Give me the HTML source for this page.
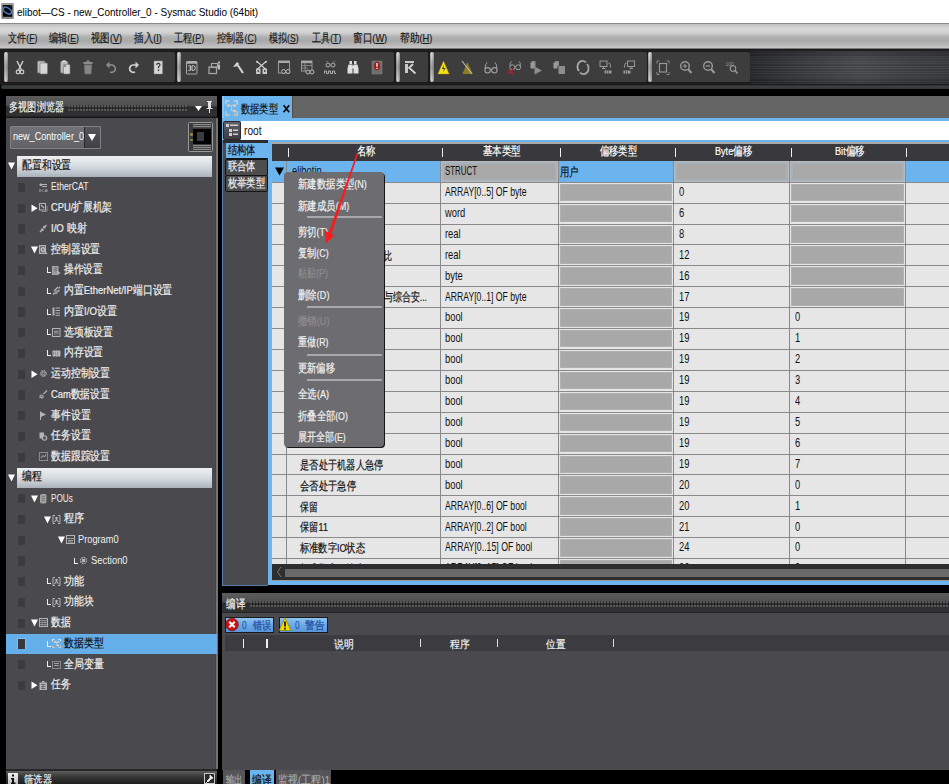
<!DOCTYPE html><html><head><meta charset="utf-8"><style>
*{margin:0;padding:0;box-sizing:border-box}
html,body{width:949px;height:784px;overflow:hidden;background:#000;font-family:"Liberation Sans",sans-serif}
.abs{position:absolute}
.t{position:absolute;white-space:nowrap;line-height:1;-webkit-text-stroke:0.2px currentColor}
u{text-decoration-thickness:1px;text-underline-offset:1px}
</style></head><body>
<div class="abs" style="left:0;top:0;width:949px;height:784px;overflow:hidden">

<div class="abs" style="left:0;top:0;width:949px;height:23px;background:#fff"></div>
<svg class="abs" style="left:0;top:0" width="16" height="22"><rect x="1.2" y="3" width="12.6" height="16" fill="#8e8e90" rx=".8"/><rect x="2" y="3.6" width="11" height="1" fill="#b0b0b2"/><rect x="2.8" y="5" width="9.4" height="11.8" fill="#050608"/><ellipse cx="7.3" cy="10.6" rx="4.6" ry="2.6" transform="rotate(35 7.3 10.6)" fill="none" stroke="#4a7cc8" stroke-width="1.5"/><circle cx="11" cy="6.3" r=".8" fill="#555"/></svg>
<div class="t" id="t0" style="left:16.90px;top:7.40px;font-size:11.5px;color:#000;-webkit-text-stroke:0;transform:scaleX(0.8668);transform-origin:0 0;">elibot—CS - new_Controller_0 - Sysmac Studio (64bit)</div>
<div class="abs" style="left:0;top:23px;width:949px;height:27px;background:linear-gradient(#555 0px,#bdbdbd 1px,#cbcbcb 3px,#d8d8d8 6px,#cfcfcf 10px,#b0b0b0 14px,#a9a9a9 18px,#b9b9b9 22px,#c6c6c6 25px,#2a2a2a 26px,#1a1a1a 27px)"></div>
<div class="t" id="t1" style="left:7.50px;top:32.65px;font-size:11.5px;color:#1a1a1a;transform:scaleX(0.7593);transform-origin:0 0;">文件(<u>F</u>)</div>
<div class="t" id="t2" style="left:49.30px;top:32.65px;font-size:11.5px;color:#1a1a1a;transform:scaleX(0.7597);transform-origin:0 0;">编辑(<u>E</u>)</div>
<div class="t" id="t3" style="left:91.00px;top:32.65px;font-size:11.5px;color:#1a1a1a;transform:scaleX(0.7902);transform-origin:0 0;">视图(<u>V</u>)</div>
<div class="t" id="t4" style="left:134.30px;top:32.65px;font-size:11.5px;color:#1a1a1a;transform:scaleX(0.7996);transform-origin:0 0;">插入(<u>I</u>)</div>
<div class="t" id="t5" style="left:174.20px;top:32.65px;font-size:11.5px;color:#1a1a1a;transform:scaleX(0.7647);transform-origin:0 0;">工程(<u>P</u>)</div>
<div class="t" id="t6" style="left:217.10px;top:32.65px;font-size:11.5px;color:#1a1a1a;transform:scaleX(0.7635);transform-origin:0 0;">控制器(<u>C</u>)</div>
<div class="t" id="t7" style="left:269.40px;top:32.65px;font-size:11.5px;color:#1a1a1a;transform:scaleX(0.7520);transform-origin:0 0;">模拟(<u>S</u>)</div>
<div class="t" id="t8" style="left:311.70px;top:32.65px;font-size:11.5px;color:#1a1a1a;transform:scaleX(0.7567);transform-origin:0 0;">工具(<u>T</u>)</div>
<div class="t" id="t9" style="left:353.40px;top:32.65px;font-size:11.5px;color:#1a1a1a;transform:scaleX(0.8038);transform-origin:0 0;">窗口(<u>W</u>)</div>
<div class="t" id="t10" style="left:399.70px;top:32.65px;font-size:11.5px;color:#1a1a1a;transform:scaleX(0.8100);transform-origin:0 0;">帮助(<u>H</u>)</div>
<div class="abs" style="left:0;top:49px;width:949px;height:36px;background:#1c1c1c"></div>
<div class="abs" style="left:750px;top:50.5px;width:199px;height:33px;background:repeating-linear-gradient(180deg,rgba(255,255,255,.035) 0 1px,rgba(0,0,0,.07) 1px 2.5px),linear-gradient(180deg,rgba(0,0,0,.25),rgba(0,0,0,0) 25%,rgba(0,0,0,0) 75%,rgba(0,0,0,.25)),linear-gradient(90deg,#2a2b2e,#3a3c40 25%,#4a4c50 55%,#404246 80%,#3a3c3f)"></div>
<div class="abs" style="left:1px;top:84.5px;width:948px;height:4.2px;background:linear-gradient(#2a2c2e,#3c3f42 40%,#34373a);border-radius:2px 0 0 2px"></div>
<div class="abs" style="left:0;top:89px;width:949px;height:7px;background:#000"></div>
<div class="abs" style="left:4px;top:51.7px;width:171px;height:30.3px;background:#3d3d3d;border-radius:2px"></div>
<div class="abs" style="left:4px;top:52px;width:4.2px;height:30px;background:linear-gradient(90deg,rgba(0,0,0,.25),rgba(0,0,0,0) 40%,rgba(0,0,0,.3)),linear-gradient(#e0e0e0,#a4a4a4 50%,#d8d8d8);border-radius:2px"></div>
<div class="abs" style="left:177px;top:51.7px;width:217px;height:30.3px;background:#3d3d3d;border-radius:2px"></div>
<div class="abs" style="left:177px;top:52px;width:4.2px;height:30px;background:linear-gradient(90deg,rgba(0,0,0,.25),rgba(0,0,0,0) 40%,rgba(0,0,0,.3)),linear-gradient(#e0e0e0,#a4a4a4 50%,#d8d8d8);border-radius:2px"></div>
<div class="abs" style="left:396px;top:51.7px;width:32px;height:30.3px;background:#3d3d3d;border-radius:2px"></div>
<div class="abs" style="left:396px;top:52px;width:4.2px;height:30px;background:linear-gradient(90deg,rgba(0,0,0,.25),rgba(0,0,0,0) 40%,rgba(0,0,0,.3)),linear-gradient(#e0e0e0,#a4a4a4 50%,#d8d8d8);border-radius:2px"></div>
<div class="abs" style="left:430px;top:51.7px;width:217px;height:30.3px;background:#3d3d3d;border-radius:2px"></div>
<div class="abs" style="left:430px;top:52px;width:4.2px;height:30px;background:linear-gradient(90deg,rgba(0,0,0,.25),rgba(0,0,0,0) 40%,rgba(0,0,0,.3)),linear-gradient(#e0e0e0,#a4a4a4 50%,#d8d8d8);border-radius:2px"></div>
<div class="abs" style="left:648px;top:51.7px;width:102px;height:30.3px;background:#3d3d3d;border-radius:2px"></div>
<div class="abs" style="left:648px;top:52px;width:4.2px;height:30px;background:linear-gradient(90deg,rgba(0,0,0,.25),rgba(0,0,0,0) 40%,rgba(0,0,0,.3)),linear-gradient(#e0e0e0,#a4a4a4 50%,#d8d8d8);border-radius:2px"></div>
<svg class="abs" style="left:0;top:0" width="949" height="90"><g transform="translate(13,60.5)"><path d="M4 0.5 L8.5 9.5 M10 0.5 L5.5 9.5" stroke="#d2d2d2" stroke-width="1.4" fill="none"/><circle cx="5" cy="11.5" r="1.8" stroke="#d2d2d2" stroke-width="1.2" fill="none"/><circle cx="9" cy="11.5" r="1.8" stroke="#d2d2d2" stroke-width="1.2" fill="none"/></g><g transform="translate(36,60.5)"><rect x="1.5" y="0.5" width="7.5" height="12" rx="1" fill="#bdbdbd" stroke="#777" stroke-width=".6"/><rect x="4" y="2.5" width="7.5" height="11" rx="1" fill="#d6d6d6" stroke="#777" stroke-width=".6"/></g><g transform="translate(59,60.5)"><rect x="1.5" y="1" width="7.5" height="11.5" rx="1.2" fill="#b8b8b8" stroke="#777" stroke-width=".6"/><path d="M3 1.5 Q5 -0.5 7.5 1.5" stroke="#ddd" stroke-width="1.2" fill="none"/><rect x="4.5" y="4" width="6.5" height="9.5" rx=".8" fill="#d6d6d6" stroke="#777" stroke-width=".6"/><rect x="5" y="4.5" width="2" height="2" fill="#888"/></g><g transform="translate(82,60.5)"><rect x="1.5" y="1.5" width="9" height="2" fill="#8c8c8c"/><rect x="4.5" y="0" width="3" height="1.5" fill="#8c8c8c"/><path d="M2 4H10L9.3 13.8H2.7Z" fill="#7a7a7a"/><path d="M4 5V13M6 5V13M8 5V13" stroke="#9a9a9a" stroke-width=".7"/></g><g transform="translate(105.5,60.5)"><path d="M3 4.5 H6.5 A3.7 3.7 0 1 1 4.5 11.5" stroke="#8c8c8c" stroke-width="1.6" fill="none"/><path d="M0.5 4.5 L4 1 L4 8 Z" fill="#8c8c8c"/></g><g transform="translate(128,60.5)"><path d="M8 4.5 H5 A3.7 3.7 0 1 0 7 11.5" stroke="#d2d2d2" stroke-width="1.7" fill="none"/><path d="M11 4.5 L7.5 1 L7.5 8 Z" fill="#d2d2d2"/></g><g transform="translate(152,60.5)"><path d="M2 0.5H10.5V13.5H2V2.5Z" fill="#d4d4d4" stroke="#888" stroke-width=".5"/><path d="M4.7 4.5 Q4.7 2.8 6.3 2.8 Q8 2.8 8 4.4 Q8 5.5 6.5 6.3 V7.8" stroke="#333" stroke-width="1.2" fill="none"/><rect x="5.8" y="9" width="1.4" height="1.5" fill="#333"/></g><g transform="translate(185,60.5)"><rect x="1.5" y="1" width="10.5" height="12.5" rx="1" fill="none" stroke="#a8a8a8" stroke-width="1"/><rect x="1.5" y="1" width="10.5" height="2.2" fill="#b4b4b4"/><path d="M3.3 5.3H5.5V7.3H4.3M5.5 7.3V9.8H3.3" stroke="#c8c8c8" stroke-width="1" fill="none"/><path d="M7 5.3H8.5Q10.3 5.3 10.3 7.55Q10.3 9.8 8.5 9.8H7Z" stroke="#c8c8c8" stroke-width="1" fill="none"/></g><g transform="translate(208,60.5)"><rect x="1" y="6.5" width="7.5" height="6.5" fill="none" stroke="#a8a8a8" stroke-width="1.2"/><rect x="3.5" y="3" width="6" height="4" fill="none" stroke="#a8a8a8" stroke-width="1.1"/><rect x="10" y="1" width="2" height="2" fill="#bbb"/><rect x="10" y="4" width="2" height="5" fill="#bbb"/></g><g transform="translate(231.5,60.5)"><path d="M1.5 6.5 L5.5 1.5 L7.5 3 L5 6 Z" fill="#d2d2d2"/><path d="M5.5 3.5 L11.5 12.5" stroke="#d2d2d2" stroke-width="2.2"/></g><g transform="translate(255,60.5)"><path d="M2 1 L11 9 M11 1 L2 9" stroke="#d2d2d2" stroke-width="1.1"/><circle cx="2" cy="1.2" r="1" fill="#d2d2d2"/><circle cx="11" cy="1.2" r="1" fill="#d2d2d2"/><rect x="1" y="8" width="4.5" height="5.5" fill="#c8c8c8"/><rect x="7.5" y="8" width="4.5" height="5.5" fill="#c8c8c8"/><rect x="2.5" y="9.5" width="1.5" height="2" fill="#555"/><rect x="9" y="9.5" width="1.5" height="2" fill="#555"/></g><g transform="translate(277.5,60.5)"><rect x="1" y="0.5" width="11" height="12" fill="none" stroke="#9a9a9a" stroke-width="1"/><rect x="1" y="0.5" width="11" height="2" fill="#aaa"/><circle cx="6" cy="11" r="2" fill="#3e3e3e" stroke="#b8b8b8" stroke-width="1"/><circle cx="10.5" cy="11" r="2" fill="#3e3e3e" stroke="#b8b8b8" stroke-width="1"/></g><g transform="translate(301,60.5)"><rect x="0.5" y="0.5" width="10.5" height="10" fill="none" stroke="#9a9a9a" stroke-width="1"/><rect x="0.5" y="0.5" width="10.5" height="2.2" fill="#aaa"/><path d="M0.5 5H11M0.5 7.5H7M4 2.5V10.5" stroke="#9a9a9a" stroke-width=".8"/><circle cx="7" cy="11.5" r="2" fill="#3e3e3e" stroke="#b8b8b8" stroke-width="1"/><circle cx="11" cy="11.5" r="2" fill="#3e3e3e" stroke="#b8b8b8" stroke-width="1"/></g><g transform="translate(324,60.5)"><circle cx="4" cy="4.5" r="2" fill="none" stroke="#b0b0b0" stroke-width="1"/><circle cx="9" cy="4.5" r="2" fill="none" stroke="#b0b0b0" stroke-width="1"/><path d="M2.5 1.5 L3.5 0.5 M10.5 1.5 L9.5 0.5" stroke="#b0b0b0" stroke-width=".8"/><path d="M0.5 13V10.5H2.5V13H4.5V10.5H6.5V13H8.5V10.5H10.5V13H12" stroke="#b0b0b0" stroke-width="1" fill="none"/></g><g transform="translate(347,60.5)"><rect x="2.5" y="0.5" width="2.5" height="3" fill="#ddd"/><rect x="7" y="0.5" width="2.5" height="3" fill="#ddd"/><path d="M1.5 4 H5.5 V13 H0.5 V8 Z M6.5 4 H10.5 L11.5 8 V13 H6.5 Z" fill="#e0e0e0"/><rect x="5" y="5" width="2" height="3" fill="#ddd"/></g><g transform="translate(370,60.5)"><rect x="2" y="0.5" width="10" height="13" fill="#6e6e6e" stroke="#888" stroke-width=".5"/><ellipse cx="7" cy="5.5" rx="2.8" ry="4.2" fill="#a01818"/><rect x="6.3" y="2.5" width="1.4" height="3.8" fill="#eee"/><rect x="6.3" y="7.3" width="1.4" height="1.3" fill="#eee"/></g><g transform="translate(404,60.5)"><rect x="1" y="0.5" width="9" height="2" fill="#c8c8c8"/><rect x="1" y="3.5" width="3" height="9" fill="#c8c8c8"/><path d="M4.5 8 L9 3.5 M6 8 L11.5 13" stroke="#d2d2d2" stroke-width="1.8"/></g><g transform="translate(437.5,60.5)"><path d="M6 0.5 L11.7 13.5 H0.3 Z" fill="#f2e01a" stroke="#a89000" stroke-width=".4"/><path d="M6.5 4 L4.5 8.5 H6.5 L5.5 12 L8 7.5 H6 Z" fill="#333"/></g><g transform="translate(461,60.5)"><path d="M6.5 1.5 L11.7 13.5 H1.3 Z" fill="#8a7e20"/><path d="M1 0.5 L11 13.5" stroke="#b8b8b8" stroke-width="1.2"/></g><g transform="translate(484,60.5)"><circle cx="3.6" cy="9.8" r="2.7" fill="none" stroke="#a0a0a0" stroke-width="1.1"/><circle cx="10.4" cy="9.8" r="2.7" fill="none" stroke="#a0a0a0" stroke-width="1.1"/><path d="M6.3 9.3 Q7 8.3 7.7 9.3" stroke="#a0a0a0" stroke-width="1" fill="none"/><path d="M1.2 8.5 Q0.8 4 3 2 M12.8 8.5 Q13.2 4 11 2" stroke="#a0a0a0" stroke-width="1" fill="none"/></g><g transform="translate(507.5,60.5)"><circle cx="4.8" cy="6.8" r="2.5" fill="none" stroke="#a0a0a0" stroke-width="1"/><circle cx="10.6" cy="6.8" r="2.5" fill="none" stroke="#a0a0a0" stroke-width="1"/><path d="M7.3 6.3 Q7.7 5.5 8.1 6.3" stroke="#a0a0a0" stroke-width=".9" fill="none"/><path d="M2.5 5.5 Q2.2 2 4 0.8 M12.9 5.5 Q13.2 2 11.4 0.8" stroke="#a0a0a0" stroke-width=".9" fill="none"/><path d="M1 8.8 L5.5 13.5 M5.5 8.8 L1 13.5" stroke="#b41c2c" stroke-width="1.6"/></g><g transform="translate(530,60.5)"><rect x="1.5" y="0.5" width="4" height="6" fill="#8a8a8a"/><rect x="0.5" y="2" width="4" height="6" fill="#9a9a9a"/><path d="M4.5 6 L12 10 L4.5 14 Z" fill="#8e8e8e"/></g><g transform="translate(553,60.5)"><rect x="2" y="0.5" width="4" height="5" fill="#8a8a8a"/><rect x="0.5" y="2" width="4" height="6" fill="#9a9a9a"/><rect x="5.5" y="5.5" width="6.5" height="8" fill="#8e8e8e"/></g><g transform="translate(576.5,60.5)"><path d="M9.5 2 A5 5.8 0 0 0 2.5 10.5 M3.5 12 A5 5.8 0 0 0 10.5 3.5" stroke="#a8a8a8" stroke-width="1.8" fill="none"/></g><g transform="translate(599.5,60.5)"><rect x="0.5" y="0.5" width="7" height="5.5" fill="none" stroke="#9a9a9a" stroke-width="1"/><path d="M2.5 8 H6 M4 6 V8" stroke="#9a9a9a" stroke-width="1"/><path d="M9 2.5 Q11 2.5 11 5 V7" stroke="#9a9a9a" stroke-width="1" fill="none"/><rect x="5" y="10" width="7" height="3" fill="#9a9a9a"/><path d="M7 10V13M9 10V13" stroke="#3e3e3e" stroke-width=".6"/></g><g transform="translate(622.5,60.5)"><rect x="5" y="0.5" width="7" height="5.5" fill="none" stroke="#9a9a9a" stroke-width="1"/><path d="M7 8 H10.5 M8.5 6 V8" stroke="#9a9a9a" stroke-width="1"/><path d="M4 2.5 Q2 2.5 2 5 V7" stroke="#9a9a9a" stroke-width="1" fill="none"/><rect x="1" y="10" width="7" height="3" fill="#9a9a9a"/><path d="M3 10V13M5 10V13" stroke="#3e3e3e" stroke-width=".6"/></g><g transform="translate(656.5,60.5)"><rect x="3" y="3" width="7" height="8.5" fill="none" stroke="#9a9a9a" stroke-width="1.1"/><path d="M0.5 3V0.5H3M10 0.5H12.5V3M12.5 11.5V14H10M3 14H0.5V11.5" stroke="#8a8a8a" stroke-width="1" fill="none"/></g><g transform="translate(679.5,60.5)"><circle cx="5.5" cy="5.5" r="4.3" fill="none" stroke="#9a9a9a" stroke-width="1.4"/><path d="M8.5 8.5 L12 12.5" stroke="#9a9a9a" stroke-width="2"/><path d="M3.5 5.5H7.5M5.5 3.5V7.5" stroke="#9a9a9a" stroke-width="1.1"/></g><g transform="translate(702.5,60.5)"><circle cx="5.5" cy="5.5" r="4.3" fill="none" stroke="#9a9a9a" stroke-width="1.4"/><path d="M8.5 8.5 L12 12.5" stroke="#9a9a9a" stroke-width="2"/><path d="M3.5 5.5H7.5" stroke="#9a9a9a" stroke-width="1.3"/></g><g transform="translate(725.5,60.5)"><text x="0" y="5" font-size="5" font-family="Liberation Sans" fill="#9a9a9a">100</text><circle cx="7.5" cy="8" r="2.8" fill="none" stroke="#9a9a9a" stroke-width="1.1"/><path d="M9.5 10 L12 13" stroke="#9a9a9a" stroke-width="1.5"/></g></svg>
<div class="abs" style="left:6px;top:96px;width:211px;height:688px;background:#4a494e"></div>
<div class="abs" style="left:215.2px;top:118px;width:0.8px;height:651px;background:#434247"></div>
<div class="abs" style="left:216px;top:117.5px;width:1.8px;height:651.5px;background:#737373;border-radius:1px 1px 0 0"></div>
<div class="abs" style="left:217.8px;top:96px;width:4.2px;height:688px;background:#000"></div>
<div class="abs" style="left:6px;top:96px;width:211px;height:21px;background:linear-gradient(#5c5c5c 0%,#505051 45%,#2a2c2e 52%,#303234 92%,#1e1e1e 100%)"></div>
<div class="abs" style="left:6px;top:117px;width:211.8px;height:1.3px;background:#161616"></div>
<div class="t" id="t11" style="left:8.50px;top:101.90px;font-size:11.5px;color:#f2f2f2;transform:scaleX(0.7639);transform-origin:0 0;">多视图浏览器</div>
<div class="abs" style="left:68px;top:104.5px;width:120px;height:6px;background-color:#343436;background-image:radial-gradient(circle at 1px 1px,#626262 0.6px,transparent 1px),radial-gradient(circle at 2.5px 3px,#1c1c1c 0.75px,transparent 1px),radial-gradient(circle at 1px 5px,#626262 0.6px,transparent 1px);background-size:3px 6px"></div>
<svg class="abs" style="left:195px;top:106px" width="7" height="6"><path d="M0 0H7L3.5 5Z" fill="#fff"/></svg>
<svg class="abs" style="left:206px;top:101px" width="7" height="12"><path d="M1 0H6V1H5V7H6.5V8H4V12H3V8H0.5V7H2V1H1Z" fill="#e0e0e0"/></svg>
<div class="abs" style="left:10px;top:126px;width:91px;height:23px;background:linear-gradient(#727278,#616166);border:1px solid #828286;border-radius:1px"></div>
<div class="abs" style="left:11px;top:127px;width:73px;height:21px;overflow:hidden"><div class="t" id="t12" style="left:1.50px;top:4.40px;font-size:11.5px;color:#fff;-webkit-text-stroke:0;transform:scaleX(0.7877);transform-origin:0 0;">new_Controller_0</div></div>
<div class="abs" style="left:84px;top:127px;width:16px;height:21px;background:linear-gradient(#55555b,#404046);border-left:1px solid #2a2a2e"></div>
<svg class="abs" style="left:88px;top:134px" width="8" height="7"><path d="M0 0H8L4 7Z" fill="#fff"/></svg>
<div class="abs" style="left:187.7px;top:122.1px;width:25px;height:29.8px;background:#3a3a3c;border:1.4px solid #9a9a9a;border-radius:1.5px"></div>
<div class="abs" style="left:193.3px;top:128.7px;width:17.6px;height:15.3px;background:#000"></div>
<div class="abs" style="left:196.8px;top:131.8px;width:7.2px;height:9.2px;background:#3c3c3c"></div>
<div class="abs" style="left:193px;top:123.8px;width:17.5px;height:4px;background:repeating-linear-gradient(#8a8a8a 0 1px,#4a4a4a 1px 2px)"></div>
<div class="abs" style="left:193px;top:145.3px;width:17.5px;height:4.5px;background:repeating-linear-gradient(#8a8a8a 0 1px,#4a4a4a 1px 2px)"></div>
<div class="abs" style="left:190.3px;top:133px;width:2.6px;height:2.5px;background:#9a8430;border-radius:1px"></div>
<div class="abs" style="left:190.3px;top:138.6px;width:2.6px;height:2.5px;background:#9a8430;border-radius:1px"></div>
<div class="abs" style="left:17px;top:156.45px;width:195px;height:20.5px;background:linear-gradient(#eef0f2,#d8dde2 45%,#b8c0c7 85%,#a8b1b9)"></div>
<svg class="abs" style="left:8px;top:162px" width="7" height="8"><path d="M0 0.5H7L3.5 7.5Z" fill="#fff"/></svg>
<div class="t" id="t13" style="left:22.10px;top:159.50px;font-size:11.5px;color:#111;transform:scaleX(0.8217);transform-origin:0 0;">配置和设置</div>
<div class="abs" style="left:17px;top:467.70px;width:195px;height:20.5px;background:linear-gradient(#eef0f2,#d8dde2 45%,#b8c0c7 85%,#a8b1b9)"></div>
<svg class="abs" style="left:8px;top:474px" width="7" height="8"><path d="M0 0.5H7L3.5 7.5Z" fill="#fff"/></svg>
<div class="t" id="t14" style="left:22.10px;top:470.75px;font-size:11.5px;color:#111;transform:scaleX(0.8208);transform-origin:0 0;">编程</div>
<div class="abs" style="left:18px;top:182.85px;width:7.2px;height:9.4px;background:#3b3a3f"></div>
<svg class="abs" style="left:38.7px;top:182.55px" width="9" height="10"><path d="M1 1h1.5v1.5H1z M3 1.5H8 M3 3.5H8" stroke="#b4b4b4" stroke-width="1" fill="#b4b4b4"/><text x="0" y="8.8" font-size="4.2" font-family="Liberation Sans" fill="#b4b4b4">ECAT</text></svg>
<div class="t" id="t15" style="left:50.60px;top:181.25px;font-size:11.5px;color:#f0f0f0;-webkit-text-stroke:0;transform:scaleX(0.7554);transform-origin:0 0;">EtherCAT</div>
<div class="abs" style="left:18px;top:203.60px;width:7.2px;height:9.4px;background:#3b3a3f"></div>
<svg class="abs" style="left:30.5px;top:203.60px" width="7" height="9"><path d="M0.5 0.5V8L6.5 4.25Z" fill="#fff"/></svg>
<svg class="abs" style="left:38.7px;top:203.30px" width="9" height="10"><rect x="0.5" y="0.5" width="6" height="6.5" fill="none" stroke="#b4b4b4" stroke-width="1"/><path d="M2.5 8.5H8V3" stroke="#8a8a8a" stroke-width="1" fill="none"/><path d="M2 2L5 5" stroke="#b4b4b4" stroke-width="1.2"/></svg>
<div class="t" id="t16" style="left:50.60px;top:202.00px;font-size:11.5px;color:#f0f0f0;transform:scaleX(0.8108);transform-origin:0 0;">CPU/扩展机架</div>
<div class="abs" style="left:18px;top:224.35px;width:7.2px;height:9.4px;background:#3b3a3f"></div>
<svg class="abs" style="left:38.7px;top:224.05px" width="9" height="10"><path d="M1 8L4 5M4 5L3.5 7M4 5L2 5.5" stroke="#b4b4b4" stroke-width="1.4" fill="none"/><path d="M7.5 1L4.5 4M4.5 4L5 2M4.5 4L6.5 3.5" stroke="#b4b4b4" stroke-width="1.4" fill="none"/></svg>
<div class="t" id="t17" style="left:50.60px;top:222.75px;font-size:11.5px;color:#f0f0f0;transform:scaleX(0.8394);transform-origin:0 0;">I/O 映射</div>
<div class="abs" style="left:18px;top:245.10px;width:7.2px;height:9.4px;background:#3b3a3f"></div>
<svg class="abs" style="left:30.5px;top:245.90px" width="7" height="8"><path d="M0 0.5H7L3.5 7.5Z" fill="#fff"/></svg>
<svg class="abs" style="left:38.7px;top:244.80px" width="9" height="10"><rect x="0.5" y="0.5" width="6" height="8" fill="#777" stroke="#b4b4b4" stroke-width="1"/><circle cx="4" cy="4.5" r="1.8" fill="none" stroke="#ddd" stroke-width="1"/><path d="M5.5 6L8 9" stroke="#b4b4b4" stroke-width="1.2"/></svg>
<div class="t" id="t18" style="left:50.60px;top:243.50px;font-size:11.5px;color:#f0f0f0;transform:scaleX(0.8200);transform-origin:0 0;">控制器设置</div>
<div class="abs" style="left:18px;top:265.85px;width:7.2px;height:9.4px;background:#3b3a3f"></div>
<div class="abs" style="left:46.5px;top:267.2px;width:4.5px;height:6px;border-left:1.5px solid #f0f0f0;border-bottom:1.5px solid #f0f0f0"></div>
<svg class="abs" style="left:52.3px;top:265.55px" width="9" height="10"><rect x="0.5" y="0.5" width="5.5" height="8" fill="#999" stroke="#b4b4b4" stroke-width=".8"/><path d="M2 2H5M2 4H5" stroke="#666" stroke-width=".8"/><path d="M5.5 4.5L8.5 7L5.5 9Z" fill="#b4b4b4"/></svg>
<div class="t" id="t19" style="left:64.40px;top:264.25px;font-size:11.5px;color:#f0f0f0;transform:scaleX(0.8083);transform-origin:0 0;">操作设置</div>
<div class="abs" style="left:18px;top:286.60px;width:7.2px;height:9.4px;background:#3b3a3f"></div>
<div class="abs" style="left:46.5px;top:287.9px;width:4.5px;height:6px;border-left:1.5px solid #f0f0f0;border-bottom:1.5px solid #f0f0f0"></div>
<svg class="abs" style="left:52.3px;top:286.30px" width="9" height="10"><path d="M1 8.5L3 6.5M3.5 8L7.5 4M2 5L6 1M6.5 2.5L8 1" stroke="#b4b4b4" stroke-width="1.3"/><rect x="2.5" y="4" width="3" height="3" fill="#8a8a8a"/></svg>
<div class="t" id="t20" style="left:64.40px;top:285.00px;font-size:11.5px;color:#f0f0f0;transform:scaleX(0.8239);transform-origin:0 0;">内置EtherNet/IP端口设置</div>
<div class="abs" style="left:18px;top:307.35px;width:7.2px;height:9.4px;background:#3b3a3f"></div>
<div class="abs" style="left:46.5px;top:308.7px;width:4.5px;height:6px;border-left:1.5px solid #f0f0f0;border-bottom:1.5px solid #f0f0f0"></div>
<svg class="abs" style="left:52.3px;top:307.05px" width="9" height="10"><rect x="0.5" y="0.5" width="2" height="8" fill="#b4b4b4"/><path d="M3.5 1H8M3.5 3.5H8M3.5 6H8M3.5 8.2H8" stroke="#b4b4b4" stroke-width="1.1"/></svg>
<div class="t" id="t21" style="left:64.40px;top:305.75px;font-size:11.5px;color:#f0f0f0;transform:scaleX(0.8383);transform-origin:0 0;">内置I/O设置</div>
<div class="abs" style="left:18px;top:328.10px;width:7.2px;height:9.4px;background:#3b3a3f"></div>
<div class="abs" style="left:46.5px;top:329.4px;width:4.5px;height:6px;border-left:1.5px solid #f0f0f0;border-bottom:1.5px solid #f0f0f0"></div>
<svg class="abs" style="left:52.3px;top:327.80px" width="9" height="10"><rect x="0.5" y="0.5" width="7.5" height="8" fill="none" stroke="#b4b4b4" stroke-width="1"/><rect x="2" y="2.5" width="4.5" height="3" fill="#8a8a8a"/><rect x="2" y="6" width="4.5" height="1.5" fill="#666"/></svg>
<div class="t" id="t22" style="left:64.40px;top:326.50px;font-size:11.5px;color:#f0f0f0;transform:scaleX(0.8167);transform-origin:0 0;">选项板设置</div>
<div class="abs" style="left:18px;top:348.85px;width:7.2px;height:9.4px;background:#3b3a3f"></div>
<div class="abs" style="left:46.5px;top:350.2px;width:4.5px;height:6px;border-left:1.5px solid #f0f0f0;border-bottom:1.5px solid #f0f0f0"></div>
<svg class="abs" style="left:52.3px;top:348.55px" width="9" height="10"><rect x="0.5" y="2" width="8" height="5" fill="#b4b4b4"/><path d="M1.5 1V8M3 1V8M4.5 1V8M6 1V8M7.5 1V8" stroke="#b4b4b4" stroke-width=".7"/><path d="M1.5 3V6M3.5 3V6M5.5 3V6" stroke="#777" stroke-width=".6"/></svg>
<div class="t" id="t23" style="left:64.40px;top:347.25px;font-size:11.5px;color:#f0f0f0;transform:scaleX(0.8167);transform-origin:0 0;">内存设置</div>
<div class="abs" style="left:18px;top:369.60px;width:7.2px;height:9.4px;background:#3b3a3f"></div>
<svg class="abs" style="left:30.5px;top:369.60px" width="7" height="9"><path d="M0.5 0.5V8L6.5 4.25Z" fill="#fff"/></svg>
<svg class="abs" style="left:38.7px;top:369.30px" width="9" height="10"><circle cx="4.5" cy="4.5" r="2.6" fill="none" stroke="#b4b4b4" stroke-width="1.6" stroke-dasharray="1.2 .8"/><circle cx="4.5" cy="4.5" r="1.2" fill="none" stroke="#b4b4b4" stroke-width=".8"/></svg>
<div class="t" id="t24" style="left:50.60px;top:368.00px;font-size:11.5px;color:#f0f0f0;transform:scaleX(0.8208);transform-origin:0 0;">运动控制设置</div>
<div class="abs" style="left:18px;top:390.35px;width:7.2px;height:9.4px;background:#3b3a3f"></div>
<svg class="abs" style="left:38.7px;top:390.05px" width="9" height="10"><path d="M1 8C0.5 5 3 4 4 6C5 8 2 9 2 6.5M4.5 4L8 0.5" stroke="#b4b4b4" stroke-width="1.1" fill="none"/></svg>
<div class="t" id="t25" style="left:50.60px;top:388.75px;font-size:11.5px;color:#f0f0f0;transform:scaleX(0.8093);transform-origin:0 0;">Cam数据设置</div>
<div class="abs" style="left:18px;top:411.10px;width:7.2px;height:9.4px;background:#3b3a3f"></div>
<svg class="abs" style="left:38.7px;top:410.80px" width="9" height="10"><path d="M1.5 0.5V9" stroke="#b4b4b4" stroke-width="1"/><path d="M2 1L7 3.5L2 6Z" fill="#b4b4b4"/></svg>
<div class="t" id="t26" style="left:50.60px;top:409.50px;font-size:11.5px;color:#f0f0f0;transform:scaleX(0.8229);transform-origin:0 0;">事件设置</div>
<div class="abs" style="left:18px;top:431.85px;width:7.2px;height:9.4px;background:#3b3a3f"></div>
<svg class="abs" style="left:38.7px;top:431.55px" width="9" height="10"><rect x="0.5" y="0.5" width="4.5" height="6" fill="#b4b4b4"/><circle cx="5.5" cy="6" r="2.2" fill="#555" stroke="#b4b4b4" stroke-width="1.1"/></svg>
<div class="t" id="t27" style="left:50.60px;top:430.25px;font-size:11.5px;color:#f0f0f0;transform:scaleX(0.8229);transform-origin:0 0;">任务设置</div>
<div class="abs" style="left:18px;top:452.60px;width:7.2px;height:9.4px;background:#3b3a3f"></div>
<svg class="abs" style="left:38.7px;top:452.30px" width="9" height="10"><rect x="0.5" y="0.5" width="8" height="8" fill="none" stroke="#8a8a8a" stroke-width="1"/><path d="M2 6L4 3.5L5.5 5L7 2.5" stroke="#b4b4b4" stroke-width="1" fill="none"/></svg>
<div class="t" id="t28" style="left:50.60px;top:451.00px;font-size:11.5px;color:#f0f0f0;transform:scaleX(0.8208);transform-origin:0 0;">数据跟踪设置</div>
<div class="abs" style="left:18px;top:494.10px;width:7.2px;height:9.4px;background:#3b3a3f"></div>
<svg class="abs" style="left:30.5px;top:494.90px" width="7" height="8"><path d="M0 0.5H7L3.5 7.5Z" fill="#fff"/></svg>
<svg class="abs" style="left:38.7px;top:493.80px" width="9" height="10"><rect x="1.5" y="0.5" width="5.5" height="8.5" rx="1" fill="#9a9a9a" stroke="#b4b4b4" stroke-width=".8"/><path d="M2.5 2.5H6M2.5 4.5H6M2.5 6.5H6" stroke="#777" stroke-width=".7"/></svg>
<div class="t" id="t29" style="left:50.60px;top:492.50px;font-size:11.5px;color:#f0f0f0;-webkit-text-stroke:0;transform:scaleX(0.7107);transform-origin:0 0;">POUs</div>
<div class="abs" style="left:18px;top:514.85px;width:7.2px;height:9.4px;background:#3b3a3f"></div>
<svg class="abs" style="left:44.0px;top:515.65px" width="7" height="8"><path d="M0 0.5H7L3.5 7.5Z" fill="#fff"/></svg>
<svg class="abs" style="left:52.2px;top:514.55px" width="9" height="10"><path d="M1 0.5H3M1 0.5V8.5H3M8 0.5H6M8 0.5V8.5H6" stroke="#b4b4b4" stroke-width="1" fill="none"/><circle cx="4.5" cy="3" r="1.3" fill="#b4b4b4"/><path d="M2.5 7L4.5 4.5L6.5 7" stroke="#b4b4b4" stroke-width="1.1" fill="none"/></svg>
<div class="t" id="t30" style="left:64.40px;top:513.25px;font-size:11.5px;color:#f0f0f0;transform:scaleX(0.8417);transform-origin:0 0;">程序</div>
<div class="abs" style="left:18px;top:535.60px;width:7.2px;height:9.4px;background:#3b3a3f"></div>
<svg class="abs" style="left:57.5px;top:536.40px" width="7" height="8"><path d="M0 0.5H7L3.5 7.5Z" fill="#fff"/></svg>
<svg class="abs" style="left:65.7px;top:535.30px" width="9" height="10"><rect x="0.5" y="0.5" width="8" height="8" fill="none" stroke="#b4b4b4" stroke-width="1"/><path d="M0.5 3.5H8.5M2 5.5H7M2 7H7" stroke="#b4b4b4" stroke-width=".8"/></svg>
<div class="t" id="t31" style="left:77.50px;top:534.00px;font-size:11.5px;color:#f0f0f0;-webkit-text-stroke:0;transform:scaleX(0.8040);transform-origin:0 0;">Program0</div>
<div class="abs" style="left:18px;top:556.35px;width:7.2px;height:9.4px;background:#3b3a3f"></div>
<div class="abs" style="left:73.5px;top:557.7px;width:4.5px;height:6px;border-left:1.5px solid #f0f0f0;border-bottom:1.5px solid #f0f0f0"></div>
<svg class="abs" style="left:79.3px;top:556.05px" width="9" height="10"><circle cx="4.5" cy="4.5" r="3" fill="none" stroke="#b4b4b4" stroke-width="1.3" stroke-dasharray="1.5 .8"/><rect x="3" y="3" width="3" height="3" fill="#b4b4b4"/></svg>
<div class="t" id="t32" style="left:90.70px;top:554.75px;font-size:11.5px;color:#f0f0f0;-webkit-text-stroke:0;transform:scaleX(0.8176);transform-origin:0 0;">Section0</div>
<div class="abs" style="left:18px;top:577.10px;width:7.2px;height:9.4px;background:#3b3a3f"></div>
<div class="abs" style="left:46.5px;top:578.4px;width:4.5px;height:6px;border-left:1.5px solid #f0f0f0;border-bottom:1.5px solid #f0f0f0"></div>
<svg class="abs" style="left:52.3px;top:576.80px" width="9" height="10"><path d="M1 0.5H3M1 0.5V8.5H3M8 0.5H6M8 0.5V8.5H6" stroke="#b4b4b4" stroke-width="1" fill="none"/><circle cx="4.5" cy="3" r="1.3" fill="#b4b4b4"/><path d="M2.5 7L4.5 4.5L6.5 7" stroke="#b4b4b4" stroke-width="1.1" fill="none"/></svg>
<div class="t" id="t33" style="left:64.40px;top:575.50px;font-size:11.5px;color:#f0f0f0;transform:scaleX(0.8417);transform-origin:0 0;">功能</div>
<div class="abs" style="left:18px;top:597.85px;width:7.2px;height:9.4px;background:#3b3a3f"></div>
<div class="abs" style="left:46.5px;top:599.2px;width:4.5px;height:6px;border-left:1.5px solid #f0f0f0;border-bottom:1.5px solid #f0f0f0"></div>
<svg class="abs" style="left:52.3px;top:597.55px" width="9" height="10"><path d="M1 0.5H3M1 0.5V8.5H3M8 0.5H6M8 0.5V8.5H6" stroke="#b4b4b4" stroke-width="1" fill="none"/><circle cx="4.5" cy="3" r="1.3" fill="#b4b4b4"/><path d="M2.5 7L4.5 4.5L6.5 7" stroke="#b4b4b4" stroke-width="1.1" fill="none"/></svg>
<div class="t" id="t34" style="left:64.40px;top:596.25px;font-size:11.5px;color:#f0f0f0;transform:scaleX(0.8250);transform-origin:0 0;">功能块</div>
<div class="abs" style="left:18px;top:618.60px;width:7.2px;height:9.4px;background:#3b3a3f"></div>
<svg class="abs" style="left:30.5px;top:619.40px" width="7" height="8"><path d="M0 0.5H7L3.5 7.5Z" fill="#fff"/></svg>
<svg class="abs" style="left:38.7px;top:618.30px" width="9" height="10"><rect x="0.5" y="0.5" width="8" height="8" fill="none" stroke="#b4b4b4" stroke-width="1"/><path d="M0.5 2.5H8.5M0.5 4.5H8.5M0.5 6.5H8.5M3 2.5V8.5M6 2.5V8.5" stroke="#b4b4b4" stroke-width=".6"/></svg>
<div class="t" id="t35" style="left:50.60px;top:617.00px;font-size:11.5px;color:#f0f0f0;transform:scaleX(0.8208);transform-origin:0 0;">数据</div>
<div class="abs" style="left:6px;top:633.95px;width:211px;height:20.2px;background:#64aeea"></div>
<div class="abs" style="left:17.3px;top:638.35px;width:8.6px;height:10.8px;background:#7cc0f4"></div>
<div class="abs" style="left:18px;top:639.35px;width:7.2px;height:9.4px;background:#38373c"></div>
<div class="abs" style="left:46.5px;top:640.7px;width:4.5px;height:6px;border-left:1.5px solid #f0f0f0;border-bottom:1.5px solid #f0f0f0"></div>
<svg class="abs" style="left:52.3px;top:639.05px" width="9" height="10"><path d="M0.5 2.5V0.5H2.5M6.5 0.5H8.5V2.5" stroke="#e4ecf4" stroke-width="1" fill="none"/><path d="M8.5 6.5V8.5H6.5M2.5 8.5H0.5V6.5" stroke="#dcc8b4" stroke-width="1" fill="none"/><path d="M3 3H6M4.5 3V6.5L6 6.5" stroke="#c8d8e8" stroke-width=".7" fill="none"/><circle cx="3" cy="3" r="1.1" fill="#e8d4c0"/><circle cx="6" cy="3" r="1.1" fill="#e8d4c0"/><circle cx="6" cy="6.5" r="1.1" fill="#e8d4c0"/></svg>
<div class="t" id="t36" style="left:64.40px;top:637.75px;font-size:11.5px;color:#111;transform:scaleX(0.8229);transform-origin:0 0;">数据类型</div>
<div class="abs" style="left:18px;top:660.10px;width:7.2px;height:9.4px;background:#3b3a3f"></div>
<div class="abs" style="left:46.5px;top:661.4px;width:4.5px;height:6px;border-left:1.5px solid #f0f0f0;border-bottom:1.5px solid #f0f0f0"></div>
<svg class="abs" style="left:52.3px;top:659.80px" width="9" height="10"><rect x="0.5" y="1.5" width="8" height="7" fill="none" stroke="#8a8a8a" stroke-width="1"/><path d="M2 3.5H7M2 5.5H7" stroke="#b4b4b4" stroke-width=".8"/></svg>
<div class="t" id="t37" style="left:64.40px;top:658.50px;font-size:11.5px;color:#f0f0f0;transform:scaleX(0.8333);transform-origin:0 0;">全局变量</div>
<div class="abs" style="left:18px;top:680.85px;width:7.2px;height:9.4px;background:#3b3a3f"></div>
<svg class="abs" style="left:30.5px;top:680.85px" width="7" height="9"><path d="M0.5 0.5V8L6.5 4.25Z" fill="#fff"/></svg>
<svg class="abs" style="left:38.7px;top:680.55px" width="9" height="10"><rect x="0.5" y="1.5" width="7.5" height="7.5" fill="#b4b4b4"/><path d="M2 3.5H6.5M2 5.5H6.5M2 7.5H6.5M4 3V8.5" stroke="#555" stroke-width=".7"/><rect x="3" y="0" width="2.5" height="1.5" fill="#b4b4b4"/></svg>
<div class="t" id="t38" style="left:50.60px;top:679.25px;font-size:11.5px;color:#f0f0f0;transform:scaleX(0.8208);transform-origin:0 0;">任务</div>
<div class="abs" style="left:6px;top:769px;width:211px;height:2px;background:#262628"></div>
<div class="abs" style="left:6px;top:771px;width:211px;height:13px;background:linear-gradient(#5e5e5e,#3a3a3a 40%,#1e1e1e)"></div>
<div class="abs" style="left:8px;top:773px;width:10px;height:11px;background:linear-gradient(#f0f0f0,#c0c0c0)"></div>
<svg class="abs" style="left:8px;top:773px" width="10" height="11"><path d="M4 1.5h2v2h-2zM3 5h3v4.5h1.5v1.5h-4.5v-1.5h1v-3h-1z" fill="#111"/></svg>
<div class="t" id="t39" style="left:23.90px;top:774.90px;font-size:11.5px;color:#f0f0f0;transform:scaleX(0.7722);transform-origin:0 0;">筛选器</div>
<div class="abs" style="left:204px;top:773px;width:11px;height:11px;border:1px solid #c8c8c8;background:#2a2a2a"></div>
<svg class="abs" style="left:205px;top:774px" width="9" height="10"><path d="M5 1L8 4L6 5L3 8L2 7L5 4Z M1 9L3 7" stroke="#eee" fill="#eee" stroke-width=".8"/></svg>
<div class="abs" style="left:222px;top:96px;width:727px;height:488.8px;background:#6cb4ee"></div>
<div class="abs" style="left:292px;top:96px;width:657px;height:22px;background:#646464;border-left:1px solid #5a4a44"></div>
<div class="t" id="t40" style="left:240.60px;top:103.60px;font-size:11.5px;color:#111;transform:scaleX(0.7708);transform-origin:0 0;">数据类型</div>
<svg class="abs" style="left:280px;top:100px" width="14" height="16"><path d="M3.6 5.2L9.2 12.2M9.2 5.2L3.6 12.2" stroke="#050505" stroke-width="1.7"/></svg>
<svg class="abs" style="left:224px;top:99px" width="15" height="18"><g fill="none" stroke-width="1.3"><path d="M1.8 5.5V1.8H5.5M9.5 1.8H13.2V5.5" stroke="#c8d6e4"/><path d="M13.2 12V16H9.5M5.5 16H1.8V12" stroke="#d8c4b0"/><path d="M4.5 6.5H10.5M7.5 6.5V11.5L10.5 12" stroke="#b8cadc" stroke-width="1"/></g><circle cx="4.5" cy="6.5" r="1.6" fill="#e0c8b4"/><circle cx="10.5" cy="6.5" r="1.6" fill="#e0c8b4"/><circle cx="10.5" cy="12" r="1.6" fill="#e0c8b4"/></svg>
<div class="abs" style="left:222px;top:96px;width:1.5px;height:22px;background:#84c4fa"></div>
<div class="abs" style="left:223px;top:121px;width:18px;height:19px;background:linear-gradient(#606066,#3c3c42);border-radius:2px;border:1px solid #2a2a2e"></div>
<svg class="abs" style="left:224px;top:122px" width="16" height="17"><g fill="#cfcfd4"><rect x="2" y="2" width="3" height="3"/><rect x="6" y="2.5" width="8" height="1.5"/><rect x="5" y="7" width="3" height="3"/><rect x="9" y="7.5" width="5" height="1.5"/><rect x="5" y="11" width="3" height="3"/><rect x="9" y="11.5" width="5" height="1.5"/></g></svg>
<div class="abs" style="left:241px;top:120.7px;width:708px;height:19.3px;background:#fff"></div>
<div class="t" id="t41" style="left:243.80px;top:124.50px;font-size:12.5px;color:#111;-webkit-text-stroke:0;transform:scaleX(0.8122);transform-origin:0 0;">root</div>
<div class="abs" style="left:222px;top:140px;width:46px;height:445.8px;background:#4a494e;border-left:1.2px solid #5580ac;border-bottom:1.2px solid #5580ac"></div>
<div class="abs" style="left:223px;top:140px;width:45px;height:3px;background:#2c2c30"></div>
<div class="abs" style="left:226px;top:143px;width:42px;height:16px;background:#6cb4ee;border-bottom:1.5px solid #141414"></div>
<div class="t" id="t42" style="left:228.20px;top:144.85px;font-size:11.5px;color:#111;transform:scaleX(0.7667);transform-origin:0 0;">结构体</div>
<div class="abs" style="left:225.4px;top:158.5px;width:42.8px;height:17.3px;background:#4d4d4f;border:1.3px solid #141414;border-radius:2px"></div>
<div class="t" id="t43" style="left:228.20px;top:161.40px;font-size:11.5px;color:#f0f0f0;transform:scaleX(0.7667);transform-origin:0 0;">联合体</div>
<div class="abs" style="left:225.4px;top:175px;width:42.8px;height:16.6px;background:#4d4d4f;border:1.3px solid #141414;border-radius:2px"></div>
<div class="t" id="t44" style="left:228.20px;top:177.90px;font-size:11.5px;color:#f0f0f0;transform:scaleX(0.7708);transform-origin:0 0;">枚举类型</div>
<div class="abs" style="left:271px;top:142px;width:678px;height:439px;background:#e6e6e6;border-left:1px solid #a8a8a8;border-top:2px solid #a8a8a8"></div>
<div class="abs" style="left:272px;top:144px;width:677px;height:16.5px;background:#38383d"></div>
<div class="abs" style="left:288.0px;top:147.5px;width:1px;height:9.5px;background:#f0f0f0"></div>
<div class="abs" style="left:441.7px;top:147.5px;width:1px;height:9.5px;background:#f0f0f0"></div>
<div class="abs" style="left:559.5px;top:147.5px;width:1px;height:9.5px;background:#f0f0f0"></div>
<div class="abs" style="left:674.7px;top:147.5px;width:1px;height:9.5px;background:#f0f0f0"></div>
<div class="abs" style="left:790.5px;top:147.5px;width:1px;height:9.5px;background:#f0f0f0"></div>
<div class="abs" style="left:905.5px;top:147.5px;width:1px;height:9.5px;background:#f0f0f0"></div>
<div class="t" id="t45" style="left:356.80px;top:145.90px;font-size:11.5px;color:#fff;transform:scaleX(0.7750);transform-origin:0 0;">名称</div>
<div class="t" id="t46" style="left:483.00px;top:145.90px;font-size:11.5px;color:#fff;transform:scaleX(0.7896);transform-origin:0 0;">基本类型</div>
<div class="t" id="t47" style="left:600.20px;top:145.90px;font-size:11.5px;color:#fff;transform:scaleX(0.7708);transform-origin:0 0;">偏移类型</div>
<div class="t" id="t48" style="left:715.20px;top:145.90px;font-size:11.5px;color:#fff;transform:scaleX(0.7912);transform-origin:0 0;">Byte偏移</div>
<div class="t" id="t49" style="left:834.60px;top:145.90px;font-size:11.5px;color:#fff;transform:scaleX(0.7963);transform-origin:0 0;">Bit偏移</div>
<div class="abs" style="left:272px;top:160.5px;width:677px;height:403.5px;overflow:hidden">
<div class="abs" style="left:0px;top:0px;width:14.800000000000011px;height:22.210000000000008px;background:#6cb4ee;border-right:1.2px solid #8a8a8a;border-bottom:1.3px solid #8a8a8a"></div>
<svg class="abs" style="left:3px;top:6.00px" width="9" height="9"><path d="M0 0.5H9L4.5 8.5Z" fill="#000"/></svg>
<div class="abs" style="left:14.800000000000011px;top:0px;width:154.5px;height:22.210000000000008px;background:#6cb4ee;border-right:1.2px solid #8a8a8a;border-bottom:1.3px solid #8a8a8a"></div>
<div class="t" id="t50" style="left:19.50px;top:3.55px;font-size:13px;color:#111;-webkit-text-stroke:0;transform:scaleX(0.7200);transform-origin:0 0;">elibotin</div>
<div class="abs" style="left:169.3px;top:0px;width:117.80000000000001px;height:22.210000000000008px;background:#a9a9a9;box-shadow:inset 0 0 0 1px #b8babc,inset 0 0 0 3px #a7b1bb;border-right:1.2px solid #8a8a8a;border-bottom:1.3px solid #8a8a8a"></div>
<div class="t" id="t51" style="left:173.20px;top:3.55px;font-size:13px;color:#111;-webkit-text-stroke:0;transform:scaleX(0.6089);transform-origin:0 0;">STRUCT</div>
<div class="abs" style="left:287.1px;top:0px;width:115.29999999999995px;height:22.210000000000008px;background:#6cb4ee;border-right:1.2px solid #8a8a8a;border-bottom:1.3px solid #8a8a8a"></div>
<div class="t" id="t52" style="left:287.90px;top:6.50px;font-size:11.5px;color:#111;transform:scaleX(0.7833);transform-origin:0 0;">用户</div>
<div class="abs" style="left:402.4px;top:0px;width:115.70000000000005px;height:22.210000000000008px;background:#a9a9a9;box-shadow:inset 0 0 0 1px #b8babc,inset 0 0 0 3px #a7b1bb;border-right:1.2px solid #8a8a8a;border-bottom:1.3px solid #8a8a8a"></div>
<div class="abs" style="left:518.1px;top:0px;width:115.5px;height:22.210000000000008px;background:#a9a9a9;box-shadow:inset 0 0 0 1px #b8babc,inset 0 0 0 3px #a7b1bb;border-right:1.2px solid #8a8a8a;border-bottom:1.3px solid #8a8a8a"></div>
<div class="abs" style="left:633.6px;top:0px;width:43.39999999999998px;height:22.210000000000008px;background:#6cb4ee;border-right:0;border-bottom:1.3px solid #8a8a8a"></div>
<div class="abs" style="left:0px;top:22.210000000000008px;width:14.800000000000011px;height:20.91px;background:#e6e6e6;border-right:1.2px solid #8a8a8a;border-bottom:1.3px solid #8a8a8a"></div>
<div class="abs" style="left:14.800000000000011px;top:22.210000000000008px;width:154.5px;height:20.91px;background:#e6e6e6;border-right:1.2px solid #8a8a8a;border-bottom:1.3px solid #8a8a8a"></div>
<div class="abs" style="left:169.3px;top:22.210000000000008px;width:117.80000000000001px;height:20.91px;background:#e6e6e6;border-right:1.2px solid #8a8a8a;border-bottom:1.3px solid #8a8a8a"></div>
<div class="t" id="t53" style="left:173.20px;top:24.46px;font-size:13px;color:#111;-webkit-text-stroke:0;transform:scaleX(0.6656);transform-origin:0 0;">ARRAY[0..5] OF byte</div>
<div class="abs" style="left:287.1px;top:22.210000000000008px;width:115.29999999999995px;height:20.91px;background:#e6e6e6;border-right:1.2px solid #8a8a8a;border-bottom:1.3px solid #8a8a8a"></div>
<div class="abs" style="left:288.1px;top:23.210000000000008px;width:112.29999999999995px;height:17.41px;background:#a8a8a8;border:1px solid #b0b0b0"></div>
<div class="abs" style="left:402.4px;top:22.210000000000008px;width:115.70000000000005px;height:20.91px;background:#e6e6e6;border-right:1.2px solid #8a8a8a;border-bottom:1.3px solid #8a8a8a"></div>
<div class="t" id="t54" style="left:407.40px;top:24.46px;font-size:13px;color:#111;-webkit-text-stroke:0;transform:scaleX(0.7200);transform-origin:0 0;">0</div>
<div class="abs" style="left:518.1px;top:22.210000000000008px;width:115.5px;height:20.91px;background:#e6e6e6;border-right:1.2px solid #8a8a8a;border-bottom:1.3px solid #8a8a8a"></div>
<div class="abs" style="left:519.1px;top:23.210000000000008px;width:112.5px;height:17.41px;background:#a8a8a8;border:1px solid #b0b0b0"></div>
<div class="abs" style="left:633.6px;top:22.210000000000008px;width:43.39999999999998px;height:20.91px;background:#e6e6e6;border-right:0;border-bottom:1.3px solid #8a8a8a"></div>
<div class="abs" style="left:0px;top:43.120000000000005px;width:14.800000000000011px;height:20.91px;background:#e6e6e6;border-right:1.2px solid #8a8a8a;border-bottom:1.3px solid #8a8a8a"></div>
<div class="abs" style="left:14.800000000000011px;top:43.120000000000005px;width:154.5px;height:20.91px;background:#e6e6e6;border-right:1.2px solid #8a8a8a;border-bottom:1.3px solid #8a8a8a"></div>
<div class="abs" style="left:169.3px;top:43.120000000000005px;width:117.80000000000001px;height:20.91px;background:#e6e6e6;border-right:1.2px solid #8a8a8a;border-bottom:1.3px solid #8a8a8a"></div>
<div class="t" id="t55" style="left:173.20px;top:45.37px;font-size:13px;color:#111;-webkit-text-stroke:0;transform:scaleX(0.7200);transform-origin:0 0;">word</div>
<div class="abs" style="left:287.1px;top:43.120000000000005px;width:115.29999999999995px;height:20.91px;background:#e6e6e6;border-right:1.2px solid #8a8a8a;border-bottom:1.3px solid #8a8a8a"></div>
<div class="abs" style="left:288.1px;top:44.120000000000005px;width:112.29999999999995px;height:17.41px;background:#a8a8a8;border:1px solid #b0b0b0"></div>
<div class="abs" style="left:402.4px;top:43.120000000000005px;width:115.70000000000005px;height:20.91px;background:#e6e6e6;border-right:1.2px solid #8a8a8a;border-bottom:1.3px solid #8a8a8a"></div>
<div class="t" id="t56" style="left:407.40px;top:45.37px;font-size:13px;color:#111;-webkit-text-stroke:0;transform:scaleX(0.7200);transform-origin:0 0;">6</div>
<div class="abs" style="left:518.1px;top:43.120000000000005px;width:115.5px;height:20.91px;background:#e6e6e6;border-right:1.2px solid #8a8a8a;border-bottom:1.3px solid #8a8a8a"></div>
<div class="abs" style="left:519.1px;top:44.120000000000005px;width:112.5px;height:17.41px;background:#a8a8a8;border:1px solid #b0b0b0"></div>
<div class="abs" style="left:633.6px;top:43.120000000000005px;width:43.39999999999998px;height:20.91px;background:#e6e6e6;border-right:0;border-bottom:1.3px solid #8a8a8a"></div>
<div class="abs" style="left:0px;top:64.03000000000003px;width:14.800000000000011px;height:20.91px;background:#e6e6e6;border-right:1.2px solid #8a8a8a;border-bottom:1.3px solid #8a8a8a"></div>
<div class="abs" style="left:14.800000000000011px;top:64.03000000000003px;width:154.5px;height:20.91px;background:#e6e6e6;border-right:1.2px solid #8a8a8a;border-bottom:1.3px solid #8a8a8a"></div>
<div class="abs" style="left:169.3px;top:64.03000000000003px;width:117.80000000000001px;height:20.91px;background:#e6e6e6;border-right:1.2px solid #8a8a8a;border-bottom:1.3px solid #8a8a8a"></div>
<div class="t" id="t57" style="left:173.20px;top:66.28px;font-size:13px;color:#111;-webkit-text-stroke:0;transform:scaleX(0.7200);transform-origin:0 0;">real</div>
<div class="abs" style="left:287.1px;top:64.03000000000003px;width:115.29999999999995px;height:20.91px;background:#e6e6e6;border-right:1.2px solid #8a8a8a;border-bottom:1.3px solid #8a8a8a"></div>
<div class="abs" style="left:288.1px;top:65.03000000000003px;width:112.29999999999995px;height:17.41px;background:#a8a8a8;border:1px solid #b0b0b0"></div>
<div class="abs" style="left:402.4px;top:64.03000000000003px;width:115.70000000000005px;height:20.91px;background:#e6e6e6;border-right:1.2px solid #8a8a8a;border-bottom:1.3px solid #8a8a8a"></div>
<div class="t" id="t58" style="left:407.40px;top:66.28px;font-size:13px;color:#111;-webkit-text-stroke:0;transform:scaleX(0.7200);transform-origin:0 0;">8</div>
<div class="abs" style="left:518.1px;top:64.03000000000003px;width:115.5px;height:20.91px;background:#e6e6e6;border-right:1.2px solid #8a8a8a;border-bottom:1.3px solid #8a8a8a"></div>
<div class="abs" style="left:519.1px;top:65.03000000000003px;width:112.5px;height:17.41px;background:#a8a8a8;border:1px solid #b0b0b0"></div>
<div class="abs" style="left:633.6px;top:64.03000000000003px;width:43.39999999999998px;height:20.91px;background:#e6e6e6;border-right:0;border-bottom:1.3px solid #8a8a8a"></div>
<div class="abs" style="left:0px;top:84.94px;width:14.800000000000011px;height:20.91px;background:#e6e6e6;border-right:1.2px solid #8a8a8a;border-bottom:1.3px solid #8a8a8a"></div>
<div class="abs" style="left:14.800000000000011px;top:84.94px;width:154.5px;height:20.91px;background:#e6e6e6;border-right:1.2px solid #8a8a8a;border-bottom:1.3px solid #8a8a8a"></div>
<div class="t" id="t59" style="left:111.90px;top:90.14px;font-size:11.5px;color:#111;transform:scaleX(0.6667);transform-origin:0 0;">比</div>
<div class="abs" style="left:169.3px;top:84.94px;width:117.80000000000001px;height:20.91px;background:#e6e6e6;border-right:1.2px solid #8a8a8a;border-bottom:1.3px solid #8a8a8a"></div>
<div class="t" id="t60" style="left:173.20px;top:87.19px;font-size:13px;color:#111;-webkit-text-stroke:0;transform:scaleX(0.7200);transform-origin:0 0;">real</div>
<div class="abs" style="left:287.1px;top:84.94px;width:115.29999999999995px;height:20.91px;background:#e6e6e6;border-right:1.2px solid #8a8a8a;border-bottom:1.3px solid #8a8a8a"></div>
<div class="abs" style="left:288.1px;top:85.94px;width:112.29999999999995px;height:17.41px;background:#a8a8a8;border:1px solid #b0b0b0"></div>
<div class="abs" style="left:402.4px;top:84.94px;width:115.70000000000005px;height:20.91px;background:#e6e6e6;border-right:1.2px solid #8a8a8a;border-bottom:1.3px solid #8a8a8a"></div>
<div class="t" id="t61" style="left:407.40px;top:87.19px;font-size:13px;color:#111;-webkit-text-stroke:0;transform:scaleX(0.7200);transform-origin:0 0;">12</div>
<div class="abs" style="left:518.1px;top:84.94px;width:115.5px;height:20.91px;background:#e6e6e6;border-right:1.2px solid #8a8a8a;border-bottom:1.3px solid #8a8a8a"></div>
<div class="abs" style="left:519.1px;top:85.94px;width:112.5px;height:17.41px;background:#a8a8a8;border:1px solid #b0b0b0"></div>
<div class="abs" style="left:633.6px;top:84.94px;width:43.39999999999998px;height:20.91px;background:#e6e6e6;border-right:0;border-bottom:1.3px solid #8a8a8a"></div>
<div class="abs" style="left:0px;top:105.85000000000002px;width:14.800000000000011px;height:20.91px;background:#e6e6e6;border-right:1.2px solid #8a8a8a;border-bottom:1.3px solid #8a8a8a"></div>
<div class="abs" style="left:14.800000000000011px;top:105.85000000000002px;width:154.5px;height:20.91px;background:#e6e6e6;border-right:1.2px solid #8a8a8a;border-bottom:1.3px solid #8a8a8a"></div>
<div class="abs" style="left:169.3px;top:105.85000000000002px;width:117.80000000000001px;height:20.91px;background:#e6e6e6;border-right:1.2px solid #8a8a8a;border-bottom:1.3px solid #8a8a8a"></div>
<div class="t" id="t62" style="left:173.20px;top:108.10px;font-size:13px;color:#111;-webkit-text-stroke:0;transform:scaleX(0.7200);transform-origin:0 0;">byte</div>
<div class="abs" style="left:287.1px;top:105.85000000000002px;width:115.29999999999995px;height:20.91px;background:#e6e6e6;border-right:1.2px solid #8a8a8a;border-bottom:1.3px solid #8a8a8a"></div>
<div class="abs" style="left:288.1px;top:106.85000000000002px;width:112.29999999999995px;height:17.41px;background:#a8a8a8;border:1px solid #b0b0b0"></div>
<div class="abs" style="left:402.4px;top:105.85000000000002px;width:115.70000000000005px;height:20.91px;background:#e6e6e6;border-right:1.2px solid #8a8a8a;border-bottom:1.3px solid #8a8a8a"></div>
<div class="t" id="t63" style="left:407.40px;top:108.10px;font-size:13px;color:#111;-webkit-text-stroke:0;transform:scaleX(0.7200);transform-origin:0 0;">16</div>
<div class="abs" style="left:518.1px;top:105.85000000000002px;width:115.5px;height:20.91px;background:#e6e6e6;border-right:1.2px solid #8a8a8a;border-bottom:1.3px solid #8a8a8a"></div>
<div class="abs" style="left:519.1px;top:106.85000000000002px;width:112.5px;height:17.41px;background:#a8a8a8;border:1px solid #b0b0b0"></div>
<div class="abs" style="left:633.6px;top:105.85000000000002px;width:43.39999999999998px;height:20.91px;background:#e6e6e6;border-right:0;border-bottom:1.3px solid #8a8a8a"></div>
<div class="abs" style="left:0px;top:126.75999999999999px;width:14.800000000000011px;height:20.91px;background:#e6e6e6;border-right:1.2px solid #8a8a8a;border-bottom:1.3px solid #8a8a8a"></div>
<div class="abs" style="left:14.800000000000011px;top:126.75999999999999px;width:154.5px;height:20.91px;background:#e6e6e6;border-right:1.2px solid #8a8a8a;border-bottom:1.3px solid #8a8a8a"></div>
<div class="t" id="t64" style="left:111.90px;top:131.96px;font-size:11.5px;color:#111;transform:scaleX(0.7466);transform-origin:0 0;">与综合安...</div>
<div class="abs" style="left:169.3px;top:126.75999999999999px;width:117.80000000000001px;height:20.91px;background:#e6e6e6;border-right:1.2px solid #8a8a8a;border-bottom:1.3px solid #8a8a8a"></div>
<div class="t" id="t65" style="left:173.20px;top:129.01px;font-size:13px;color:#111;-webkit-text-stroke:0;transform:scaleX(0.6656);transform-origin:0 0;">ARRAY[0..1] OF byte</div>
<div class="abs" style="left:287.1px;top:126.75999999999999px;width:115.29999999999995px;height:20.91px;background:#e6e6e6;border-right:1.2px solid #8a8a8a;border-bottom:1.3px solid #8a8a8a"></div>
<div class="abs" style="left:288.1px;top:127.75999999999999px;width:112.29999999999995px;height:17.41px;background:#a8a8a8;border:1px solid #b0b0b0"></div>
<div class="abs" style="left:402.4px;top:126.75999999999999px;width:115.70000000000005px;height:20.91px;background:#e6e6e6;border-right:1.2px solid #8a8a8a;border-bottom:1.3px solid #8a8a8a"></div>
<div class="t" id="t66" style="left:407.40px;top:129.01px;font-size:13px;color:#111;-webkit-text-stroke:0;transform:scaleX(0.7200);transform-origin:0 0;">17</div>
<div class="abs" style="left:518.1px;top:126.75999999999999px;width:115.5px;height:20.91px;background:#e6e6e6;border-right:1.2px solid #8a8a8a;border-bottom:1.3px solid #8a8a8a"></div>
<div class="abs" style="left:519.1px;top:127.75999999999999px;width:112.5px;height:17.41px;background:#a8a8a8;border:1px solid #b0b0b0"></div>
<div class="abs" style="left:633.6px;top:126.75999999999999px;width:43.39999999999998px;height:20.91px;background:#e6e6e6;border-right:0;border-bottom:1.3px solid #8a8a8a"></div>
<div class="abs" style="left:0px;top:147.67000000000002px;width:14.800000000000011px;height:20.91px;background:#e6e6e6;border-right:1.2px solid #8a8a8a;border-bottom:1.3px solid #8a8a8a"></div>
<div class="abs" style="left:14.800000000000011px;top:147.67000000000002px;width:154.5px;height:20.91px;background:#e6e6e6;border-right:1.2px solid #8a8a8a;border-bottom:1.3px solid #8a8a8a"></div>
<div class="abs" style="left:169.3px;top:147.67000000000002px;width:117.80000000000001px;height:20.91px;background:#e6e6e6;border-right:1.2px solid #8a8a8a;border-bottom:1.3px solid #8a8a8a"></div>
<div class="t" id="t67" style="left:173.20px;top:149.92px;font-size:13px;color:#111;-webkit-text-stroke:0;transform:scaleX(0.7200);transform-origin:0 0;">bool</div>
<div class="abs" style="left:287.1px;top:147.67000000000002px;width:115.29999999999995px;height:20.91px;background:#e6e6e6;border-right:1.2px solid #8a8a8a;border-bottom:1.3px solid #8a8a8a"></div>
<div class="abs" style="left:288.1px;top:148.67000000000002px;width:112.29999999999995px;height:17.41px;background:#a8a8a8;border:1px solid #b0b0b0"></div>
<div class="abs" style="left:402.4px;top:147.67000000000002px;width:115.70000000000005px;height:20.91px;background:#e6e6e6;border-right:1.2px solid #8a8a8a;border-bottom:1.3px solid #8a8a8a"></div>
<div class="t" id="t68" style="left:407.40px;top:149.92px;font-size:13px;color:#111;-webkit-text-stroke:0;transform:scaleX(0.7200);transform-origin:0 0;">19</div>
<div class="abs" style="left:518.1px;top:147.67000000000002px;width:115.5px;height:20.91px;background:#e6e6e6;border-right:1.2px solid #8a8a8a;border-bottom:1.3px solid #8a8a8a"></div>
<div class="t" id="t69" style="left:522.90px;top:149.92px;font-size:13px;color:#111;-webkit-text-stroke:0;transform:scaleX(0.7200);transform-origin:0 0;">0</div>
<div class="abs" style="left:633.6px;top:147.67000000000002px;width:43.39999999999998px;height:20.91px;background:#e6e6e6;border-right:0;border-bottom:1.3px solid #8a8a8a"></div>
<div class="abs" style="left:0px;top:168.58000000000004px;width:14.800000000000011px;height:20.91px;background:#e6e6e6;border-right:1.2px solid #8a8a8a;border-bottom:1.3px solid #8a8a8a"></div>
<div class="abs" style="left:14.800000000000011px;top:168.58000000000004px;width:154.5px;height:20.91px;background:#e6e6e6;border-right:1.2px solid #8a8a8a;border-bottom:1.3px solid #8a8a8a"></div>
<div class="abs" style="left:169.3px;top:168.58000000000004px;width:117.80000000000001px;height:20.91px;background:#e6e6e6;border-right:1.2px solid #8a8a8a;border-bottom:1.3px solid #8a8a8a"></div>
<div class="t" id="t70" style="left:173.20px;top:170.83px;font-size:13px;color:#111;-webkit-text-stroke:0;transform:scaleX(0.7200);transform-origin:0 0;">bool</div>
<div class="abs" style="left:287.1px;top:168.58000000000004px;width:115.29999999999995px;height:20.91px;background:#e6e6e6;border-right:1.2px solid #8a8a8a;border-bottom:1.3px solid #8a8a8a"></div>
<div class="abs" style="left:288.1px;top:169.58000000000004px;width:112.29999999999995px;height:17.41px;background:#a8a8a8;border:1px solid #b0b0b0"></div>
<div class="abs" style="left:402.4px;top:168.58000000000004px;width:115.70000000000005px;height:20.91px;background:#e6e6e6;border-right:1.2px solid #8a8a8a;border-bottom:1.3px solid #8a8a8a"></div>
<div class="t" id="t71" style="left:407.40px;top:170.83px;font-size:13px;color:#111;-webkit-text-stroke:0;transform:scaleX(0.7200);transform-origin:0 0;">19</div>
<div class="abs" style="left:518.1px;top:168.58000000000004px;width:115.5px;height:20.91px;background:#e6e6e6;border-right:1.2px solid #8a8a8a;border-bottom:1.3px solid #8a8a8a"></div>
<div class="t" id="t72" style="left:522.90px;top:170.83px;font-size:13px;color:#111;-webkit-text-stroke:0;transform:scaleX(0.7200);transform-origin:0 0;">1</div>
<div class="abs" style="left:633.6px;top:168.58000000000004px;width:43.39999999999998px;height:20.91px;background:#e6e6e6;border-right:0;border-bottom:1.3px solid #8a8a8a"></div>
<div class="abs" style="left:0px;top:189.49px;width:14.800000000000011px;height:20.91px;background:#e6e6e6;border-right:1.2px solid #8a8a8a;border-bottom:1.3px solid #8a8a8a"></div>
<div class="abs" style="left:14.800000000000011px;top:189.49px;width:154.5px;height:20.91px;background:#e6e6e6;border-right:1.2px solid #8a8a8a;border-bottom:1.3px solid #8a8a8a"></div>
<div class="abs" style="left:169.3px;top:189.49px;width:117.80000000000001px;height:20.91px;background:#e6e6e6;border-right:1.2px solid #8a8a8a;border-bottom:1.3px solid #8a8a8a"></div>
<div class="t" id="t73" style="left:173.20px;top:191.74px;font-size:13px;color:#111;-webkit-text-stroke:0;transform:scaleX(0.7200);transform-origin:0 0;">bool</div>
<div class="abs" style="left:287.1px;top:189.49px;width:115.29999999999995px;height:20.91px;background:#e6e6e6;border-right:1.2px solid #8a8a8a;border-bottom:1.3px solid #8a8a8a"></div>
<div class="abs" style="left:288.1px;top:190.49px;width:112.29999999999995px;height:17.41px;background:#a8a8a8;border:1px solid #b0b0b0"></div>
<div class="abs" style="left:402.4px;top:189.49px;width:115.70000000000005px;height:20.91px;background:#e6e6e6;border-right:1.2px solid #8a8a8a;border-bottom:1.3px solid #8a8a8a"></div>
<div class="t" id="t74" style="left:407.40px;top:191.74px;font-size:13px;color:#111;-webkit-text-stroke:0;transform:scaleX(0.7200);transform-origin:0 0;">19</div>
<div class="abs" style="left:518.1px;top:189.49px;width:115.5px;height:20.91px;background:#e6e6e6;border-right:1.2px solid #8a8a8a;border-bottom:1.3px solid #8a8a8a"></div>
<div class="t" id="t75" style="left:522.90px;top:191.74px;font-size:13px;color:#111;-webkit-text-stroke:0;transform:scaleX(0.7200);transform-origin:0 0;">2</div>
<div class="abs" style="left:633.6px;top:189.49px;width:43.39999999999998px;height:20.91px;background:#e6e6e6;border-right:0;border-bottom:1.3px solid #8a8a8a"></div>
<div class="abs" style="left:0px;top:210.39999999999998px;width:14.800000000000011px;height:20.91px;background:#e6e6e6;border-right:1.2px solid #8a8a8a;border-bottom:1.3px solid #8a8a8a"></div>
<div class="abs" style="left:14.800000000000011px;top:210.39999999999998px;width:154.5px;height:20.91px;background:#e6e6e6;border-right:1.2px solid #8a8a8a;border-bottom:1.3px solid #8a8a8a"></div>
<div class="abs" style="left:169.3px;top:210.39999999999998px;width:117.80000000000001px;height:20.91px;background:#e6e6e6;border-right:1.2px solid #8a8a8a;border-bottom:1.3px solid #8a8a8a"></div>
<div class="t" id="t76" style="left:173.20px;top:212.65px;font-size:13px;color:#111;-webkit-text-stroke:0;transform:scaleX(0.7200);transform-origin:0 0;">bool</div>
<div class="abs" style="left:287.1px;top:210.39999999999998px;width:115.29999999999995px;height:20.91px;background:#e6e6e6;border-right:1.2px solid #8a8a8a;border-bottom:1.3px solid #8a8a8a"></div>
<div class="abs" style="left:288.1px;top:211.39999999999998px;width:112.29999999999995px;height:17.41px;background:#a8a8a8;border:1px solid #b0b0b0"></div>
<div class="abs" style="left:402.4px;top:210.39999999999998px;width:115.70000000000005px;height:20.91px;background:#e6e6e6;border-right:1.2px solid #8a8a8a;border-bottom:1.3px solid #8a8a8a"></div>
<div class="t" id="t77" style="left:407.40px;top:212.65px;font-size:13px;color:#111;-webkit-text-stroke:0;transform:scaleX(0.7200);transform-origin:0 0;">19</div>
<div class="abs" style="left:518.1px;top:210.39999999999998px;width:115.5px;height:20.91px;background:#e6e6e6;border-right:1.2px solid #8a8a8a;border-bottom:1.3px solid #8a8a8a"></div>
<div class="t" id="t78" style="left:522.90px;top:212.65px;font-size:13px;color:#111;-webkit-text-stroke:0;transform:scaleX(0.7200);transform-origin:0 0;">3</div>
<div class="abs" style="left:633.6px;top:210.39999999999998px;width:43.39999999999998px;height:20.91px;background:#e6e6e6;border-right:0;border-bottom:1.3px solid #8a8a8a"></div>
<div class="abs" style="left:0px;top:231.31px;width:14.800000000000011px;height:20.91px;background:#e6e6e6;border-right:1.2px solid #8a8a8a;border-bottom:1.3px solid #8a8a8a"></div>
<div class="abs" style="left:14.800000000000011px;top:231.31px;width:154.5px;height:20.91px;background:#e6e6e6;border-right:1.2px solid #8a8a8a;border-bottom:1.3px solid #8a8a8a"></div>
<div class="abs" style="left:169.3px;top:231.31px;width:117.80000000000001px;height:20.91px;background:#e6e6e6;border-right:1.2px solid #8a8a8a;border-bottom:1.3px solid #8a8a8a"></div>
<div class="t" id="t79" style="left:173.20px;top:233.56px;font-size:13px;color:#111;-webkit-text-stroke:0;transform:scaleX(0.7200);transform-origin:0 0;">bool</div>
<div class="abs" style="left:287.1px;top:231.31px;width:115.29999999999995px;height:20.91px;background:#e6e6e6;border-right:1.2px solid #8a8a8a;border-bottom:1.3px solid #8a8a8a"></div>
<div class="abs" style="left:288.1px;top:232.31px;width:112.29999999999995px;height:17.41px;background:#a8a8a8;border:1px solid #b0b0b0"></div>
<div class="abs" style="left:402.4px;top:231.31px;width:115.70000000000005px;height:20.91px;background:#e6e6e6;border-right:1.2px solid #8a8a8a;border-bottom:1.3px solid #8a8a8a"></div>
<div class="t" id="t80" style="left:407.40px;top:233.56px;font-size:13px;color:#111;-webkit-text-stroke:0;transform:scaleX(0.7200);transform-origin:0 0;">19</div>
<div class="abs" style="left:518.1px;top:231.31px;width:115.5px;height:20.91px;background:#e6e6e6;border-right:1.2px solid #8a8a8a;border-bottom:1.3px solid #8a8a8a"></div>
<div class="t" id="t81" style="left:522.90px;top:233.56px;font-size:13px;color:#111;-webkit-text-stroke:0;transform:scaleX(0.7200);transform-origin:0 0;">4</div>
<div class="abs" style="left:633.6px;top:231.31px;width:43.39999999999998px;height:20.91px;background:#e6e6e6;border-right:0;border-bottom:1.3px solid #8a8a8a"></div>
<div class="abs" style="left:0px;top:252.22000000000003px;width:14.800000000000011px;height:20.91px;background:#e6e6e6;border-right:1.2px solid #8a8a8a;border-bottom:1.3px solid #8a8a8a"></div>
<div class="abs" style="left:14.800000000000011px;top:252.22000000000003px;width:154.5px;height:20.91px;background:#e6e6e6;border-right:1.2px solid #8a8a8a;border-bottom:1.3px solid #8a8a8a"></div>
<div class="abs" style="left:169.3px;top:252.22000000000003px;width:117.80000000000001px;height:20.91px;background:#e6e6e6;border-right:1.2px solid #8a8a8a;border-bottom:1.3px solid #8a8a8a"></div>
<div class="t" id="t82" style="left:173.20px;top:254.47px;font-size:13px;color:#111;-webkit-text-stroke:0;transform:scaleX(0.7200);transform-origin:0 0;">bool</div>
<div class="abs" style="left:287.1px;top:252.22000000000003px;width:115.29999999999995px;height:20.91px;background:#e6e6e6;border-right:1.2px solid #8a8a8a;border-bottom:1.3px solid #8a8a8a"></div>
<div class="abs" style="left:288.1px;top:253.22000000000003px;width:112.29999999999995px;height:17.41px;background:#a8a8a8;border:1px solid #b0b0b0"></div>
<div class="abs" style="left:402.4px;top:252.22000000000003px;width:115.70000000000005px;height:20.91px;background:#e6e6e6;border-right:1.2px solid #8a8a8a;border-bottom:1.3px solid #8a8a8a"></div>
<div class="t" id="t83" style="left:407.40px;top:254.47px;font-size:13px;color:#111;-webkit-text-stroke:0;transform:scaleX(0.7200);transform-origin:0 0;">19</div>
<div class="abs" style="left:518.1px;top:252.22000000000003px;width:115.5px;height:20.91px;background:#e6e6e6;border-right:1.2px solid #8a8a8a;border-bottom:1.3px solid #8a8a8a"></div>
<div class="t" id="t84" style="left:522.90px;top:254.47px;font-size:13px;color:#111;-webkit-text-stroke:0;transform:scaleX(0.7200);transform-origin:0 0;">5</div>
<div class="abs" style="left:633.6px;top:252.22000000000003px;width:43.39999999999998px;height:20.91px;background:#e6e6e6;border-right:0;border-bottom:1.3px solid #8a8a8a"></div>
<div class="abs" style="left:0px;top:273.13px;width:14.800000000000011px;height:20.91px;background:#e6e6e6;border-right:1.2px solid #8a8a8a;border-bottom:1.3px solid #8a8a8a"></div>
<div class="abs" style="left:14.800000000000011px;top:273.13px;width:154.5px;height:20.91px;background:#e6e6e6;border-right:1.2px solid #8a8a8a;border-bottom:1.3px solid #8a8a8a"></div>
<div class="abs" style="left:169.3px;top:273.13px;width:117.80000000000001px;height:20.91px;background:#e6e6e6;border-right:1.2px solid #8a8a8a;border-bottom:1.3px solid #8a8a8a"></div>
<div class="t" id="t85" style="left:173.20px;top:275.38px;font-size:13px;color:#111;-webkit-text-stroke:0;transform:scaleX(0.7200);transform-origin:0 0;">bool</div>
<div class="abs" style="left:287.1px;top:273.13px;width:115.29999999999995px;height:20.91px;background:#e6e6e6;border-right:1.2px solid #8a8a8a;border-bottom:1.3px solid #8a8a8a"></div>
<div class="abs" style="left:288.1px;top:274.13px;width:112.29999999999995px;height:17.41px;background:#a8a8a8;border:1px solid #b0b0b0"></div>
<div class="abs" style="left:402.4px;top:273.13px;width:115.70000000000005px;height:20.91px;background:#e6e6e6;border-right:1.2px solid #8a8a8a;border-bottom:1.3px solid #8a8a8a"></div>
<div class="t" id="t86" style="left:407.40px;top:275.38px;font-size:13px;color:#111;-webkit-text-stroke:0;transform:scaleX(0.7200);transform-origin:0 0;">19</div>
<div class="abs" style="left:518.1px;top:273.13px;width:115.5px;height:20.91px;background:#e6e6e6;border-right:1.2px solid #8a8a8a;border-bottom:1.3px solid #8a8a8a"></div>
<div class="t" id="t87" style="left:522.90px;top:275.38px;font-size:13px;color:#111;-webkit-text-stroke:0;transform:scaleX(0.7200);transform-origin:0 0;">6</div>
<div class="abs" style="left:633.6px;top:273.13px;width:43.39999999999998px;height:20.91px;background:#e6e6e6;border-right:0;border-bottom:1.3px solid #8a8a8a"></div>
<div class="abs" style="left:0px;top:294.04px;width:14.800000000000011px;height:20.91px;background:#e6e6e6;border-right:1.2px solid #8a8a8a;border-bottom:1.3px solid #8a8a8a"></div>
<div class="abs" style="left:14.800000000000011px;top:294.04px;width:154.5px;height:20.91px;background:#e6e6e6;border-right:1.2px solid #8a8a8a;border-bottom:1.3px solid #8a8a8a"></div>
<div class="t" id="t88" style="left:27.50px;top:299.24px;font-size:11.5px;color:#111;transform:scaleX(0.7722);transform-origin:0 0;">是否处于机器人急停</div>
<div class="abs" style="left:169.3px;top:294.04px;width:117.80000000000001px;height:20.91px;background:#e6e6e6;border-right:1.2px solid #8a8a8a;border-bottom:1.3px solid #8a8a8a"></div>
<div class="t" id="t89" style="left:173.20px;top:296.29px;font-size:13px;color:#111;-webkit-text-stroke:0;transform:scaleX(0.7200);transform-origin:0 0;">bool</div>
<div class="abs" style="left:287.1px;top:294.04px;width:115.29999999999995px;height:20.91px;background:#e6e6e6;border-right:1.2px solid #8a8a8a;border-bottom:1.3px solid #8a8a8a"></div>
<div class="abs" style="left:288.1px;top:295.04px;width:112.29999999999995px;height:17.41px;background:#a8a8a8;border:1px solid #b0b0b0"></div>
<div class="abs" style="left:402.4px;top:294.04px;width:115.70000000000005px;height:20.91px;background:#e6e6e6;border-right:1.2px solid #8a8a8a;border-bottom:1.3px solid #8a8a8a"></div>
<div class="t" id="t90" style="left:407.40px;top:296.29px;font-size:13px;color:#111;-webkit-text-stroke:0;transform:scaleX(0.7200);transform-origin:0 0;">19</div>
<div class="abs" style="left:518.1px;top:294.04px;width:115.5px;height:20.91px;background:#e6e6e6;border-right:1.2px solid #8a8a8a;border-bottom:1.3px solid #8a8a8a"></div>
<div class="t" id="t91" style="left:522.90px;top:296.29px;font-size:13px;color:#111;-webkit-text-stroke:0;transform:scaleX(0.7200);transform-origin:0 0;">7</div>
<div class="abs" style="left:633.6px;top:294.04px;width:43.39999999999998px;height:20.91px;background:#e6e6e6;border-right:0;border-bottom:1.3px solid #8a8a8a"></div>
<div class="abs" style="left:0px;top:314.95px;width:14.800000000000011px;height:20.91px;background:#e6e6e6;border-right:1.2px solid #8a8a8a;border-bottom:1.3px solid #8a8a8a"></div>
<div class="abs" style="left:14.800000000000011px;top:314.95px;width:154.5px;height:20.91px;background:#e6e6e6;border-right:1.2px solid #8a8a8a;border-bottom:1.3px solid #8a8a8a"></div>
<div class="t" id="t92" style="left:27.50px;top:320.15px;font-size:11.5px;color:#111;transform:scaleX(0.7764);transform-origin:0 0;">会否处于急停</div>
<div class="abs" style="left:169.3px;top:314.95px;width:117.80000000000001px;height:20.91px;background:#e6e6e6;border-right:1.2px solid #8a8a8a;border-bottom:1.3px solid #8a8a8a"></div>
<div class="t" id="t93" style="left:173.20px;top:317.20px;font-size:13px;color:#111;-webkit-text-stroke:0;transform:scaleX(0.7200);transform-origin:0 0;">bool</div>
<div class="abs" style="left:287.1px;top:314.95px;width:115.29999999999995px;height:20.91px;background:#e6e6e6;border-right:1.2px solid #8a8a8a;border-bottom:1.3px solid #8a8a8a"></div>
<div class="abs" style="left:288.1px;top:315.95px;width:112.29999999999995px;height:17.41px;background:#a8a8a8;border:1px solid #b0b0b0"></div>
<div class="abs" style="left:402.4px;top:314.95px;width:115.70000000000005px;height:20.91px;background:#e6e6e6;border-right:1.2px solid #8a8a8a;border-bottom:1.3px solid #8a8a8a"></div>
<div class="t" id="t94" style="left:407.40px;top:317.20px;font-size:13px;color:#111;-webkit-text-stroke:0;transform:scaleX(0.7200);transform-origin:0 0;">20</div>
<div class="abs" style="left:518.1px;top:314.95px;width:115.5px;height:20.91px;background:#e6e6e6;border-right:1.2px solid #8a8a8a;border-bottom:1.3px solid #8a8a8a"></div>
<div class="t" id="t95" style="left:522.90px;top:317.20px;font-size:13px;color:#111;-webkit-text-stroke:0;transform:scaleX(0.7200);transform-origin:0 0;">0</div>
<div class="abs" style="left:633.6px;top:314.95px;width:43.39999999999998px;height:20.91px;background:#e6e6e6;border-right:0;border-bottom:1.3px solid #8a8a8a"></div>
<div class="abs" style="left:0px;top:335.86px;width:14.800000000000011px;height:20.91px;background:#e6e6e6;border-right:1.2px solid #8a8a8a;border-bottom:1.3px solid #8a8a8a"></div>
<div class="abs" style="left:14.800000000000011px;top:335.86px;width:154.5px;height:20.91px;background:#e6e6e6;border-right:1.2px solid #8a8a8a;border-bottom:1.3px solid #8a8a8a"></div>
<div class="t" id="t96" style="left:27.50px;top:341.06px;font-size:11.5px;color:#111;transform:scaleX(0.7458);transform-origin:0 0;">保留</div>
<div class="abs" style="left:169.3px;top:335.86px;width:117.80000000000001px;height:20.91px;background:#e6e6e6;border-right:1.2px solid #8a8a8a;border-bottom:1.3px solid #8a8a8a"></div>
<div class="t" id="t97" style="left:173.20px;top:338.11px;font-size:13px;color:#111;-webkit-text-stroke:0;transform:scaleX(0.6664);transform-origin:0 0;">ARRAY[0..6] OF bool</div>
<div class="abs" style="left:287.1px;top:335.86px;width:115.29999999999995px;height:20.91px;background:#e6e6e6;border-right:1.2px solid #8a8a8a;border-bottom:1.3px solid #8a8a8a"></div>
<div class="abs" style="left:288.1px;top:336.86px;width:112.29999999999995px;height:17.41px;background:#a8a8a8;border:1px solid #b0b0b0"></div>
<div class="abs" style="left:402.4px;top:335.86px;width:115.70000000000005px;height:20.91px;background:#e6e6e6;border-right:1.2px solid #8a8a8a;border-bottom:1.3px solid #8a8a8a"></div>
<div class="t" id="t98" style="left:407.40px;top:338.11px;font-size:13px;color:#111;-webkit-text-stroke:0;transform:scaleX(0.7200);transform-origin:0 0;">20</div>
<div class="abs" style="left:518.1px;top:335.86px;width:115.5px;height:20.91px;background:#e6e6e6;border-right:1.2px solid #8a8a8a;border-bottom:1.3px solid #8a8a8a"></div>
<div class="t" id="t99" style="left:522.90px;top:338.11px;font-size:13px;color:#111;-webkit-text-stroke:0;transform:scaleX(0.7200);transform-origin:0 0;">1</div>
<div class="abs" style="left:633.6px;top:335.86px;width:43.39999999999998px;height:20.91px;background:#e6e6e6;border-right:0;border-bottom:1.3px solid #8a8a8a"></div>
<div class="abs" style="left:0px;top:356.77px;width:14.800000000000011px;height:20.91px;background:#e6e6e6;border-right:1.2px solid #8a8a8a;border-bottom:1.3px solid #8a8a8a"></div>
<div class="abs" style="left:14.800000000000011px;top:356.77px;width:154.5px;height:20.91px;background:#e6e6e6;border-right:1.2px solid #8a8a8a;border-bottom:1.3px solid #8a8a8a"></div>
<div class="t" id="t100" style="left:27.50px;top:361.97px;font-size:11.5px;color:#111;transform:scaleX(0.7760);transform-origin:0 0;">保留11</div>
<div class="abs" style="left:169.3px;top:356.77px;width:117.80000000000001px;height:20.91px;background:#e6e6e6;border-right:1.2px solid #8a8a8a;border-bottom:1.3px solid #8a8a8a"></div>
<div class="t" id="t101" style="left:173.20px;top:359.02px;font-size:13px;color:#111;-webkit-text-stroke:0;transform:scaleX(0.6664);transform-origin:0 0;">ARRAY[0..2] OF bool</div>
<div class="abs" style="left:287.1px;top:356.77px;width:115.29999999999995px;height:20.91px;background:#e6e6e6;border-right:1.2px solid #8a8a8a;border-bottom:1.3px solid #8a8a8a"></div>
<div class="abs" style="left:288.1px;top:357.77px;width:112.29999999999995px;height:17.41px;background:#a8a8a8;border:1px solid #b0b0b0"></div>
<div class="abs" style="left:402.4px;top:356.77px;width:115.70000000000005px;height:20.91px;background:#e6e6e6;border-right:1.2px solid #8a8a8a;border-bottom:1.3px solid #8a8a8a"></div>
<div class="t" id="t102" style="left:407.40px;top:359.02px;font-size:13px;color:#111;-webkit-text-stroke:0;transform:scaleX(0.7200);transform-origin:0 0;">21</div>
<div class="abs" style="left:518.1px;top:356.77px;width:115.5px;height:20.91px;background:#e6e6e6;border-right:1.2px solid #8a8a8a;border-bottom:1.3px solid #8a8a8a"></div>
<div class="t" id="t103" style="left:522.90px;top:359.02px;font-size:13px;color:#111;-webkit-text-stroke:0;transform:scaleX(0.7200);transform-origin:0 0;">0</div>
<div class="abs" style="left:633.6px;top:356.77px;width:43.39999999999998px;height:20.91px;background:#e6e6e6;border-right:0;border-bottom:1.3px solid #8a8a8a"></div>
<div class="abs" style="left:0px;top:377.68000000000006px;width:14.800000000000011px;height:20.91px;background:#e6e6e6;border-right:1.2px solid #8a8a8a;border-bottom:1.3px solid #8a8a8a"></div>
<div class="abs" style="left:14.800000000000011px;top:377.68000000000006px;width:154.5px;height:20.91px;background:#e6e6e6;border-right:1.2px solid #8a8a8a;border-bottom:1.3px solid #8a8a8a"></div>
<div class="t" id="t104" style="left:27.50px;top:382.88px;font-size:11.5px;color:#111;transform:scaleX(0.7701);transform-origin:0 0;">标准数字IO状态</div>
<div class="abs" style="left:169.3px;top:377.68000000000006px;width:117.80000000000001px;height:20.91px;background:#e6e6e6;border-right:1.2px solid #8a8a8a;border-bottom:1.3px solid #8a8a8a"></div>
<div class="t" id="t105" style="left:173.20px;top:379.93px;font-size:13px;color:#111;-webkit-text-stroke:0;transform:scaleX(0.6717);transform-origin:0 0;">ARRAY[0..15] OF bool</div>
<div class="abs" style="left:287.1px;top:377.68000000000006px;width:115.29999999999995px;height:20.91px;background:#e6e6e6;border-right:1.2px solid #8a8a8a;border-bottom:1.3px solid #8a8a8a"></div>
<div class="abs" style="left:288.1px;top:378.68000000000006px;width:112.29999999999995px;height:17.41px;background:#a8a8a8;border:1px solid #b0b0b0"></div>
<div class="abs" style="left:402.4px;top:377.68000000000006px;width:115.70000000000005px;height:20.91px;background:#e6e6e6;border-right:1.2px solid #8a8a8a;border-bottom:1.3px solid #8a8a8a"></div>
<div class="t" id="t106" style="left:407.40px;top:379.93px;font-size:13px;color:#111;-webkit-text-stroke:0;transform:scaleX(0.7200);transform-origin:0 0;">24</div>
<div class="abs" style="left:518.1px;top:377.68000000000006px;width:115.5px;height:20.91px;background:#e6e6e6;border-right:1.2px solid #8a8a8a;border-bottom:1.3px solid #8a8a8a"></div>
<div class="t" id="t107" style="left:522.90px;top:379.93px;font-size:13px;color:#111;-webkit-text-stroke:0;transform:scaleX(0.7200);transform-origin:0 0;">0</div>
<div class="abs" style="left:633.6px;top:377.68000000000006px;width:43.39999999999998px;height:20.91px;background:#e6e6e6;border-right:0;border-bottom:1.3px solid #8a8a8a"></div>
<div class="abs" style="left:0px;top:398.59000000000003px;width:14.800000000000011px;height:20.91px;background:#e6e6e6;border-right:1.2px solid #8a8a8a;border-bottom:1.3px solid #8a8a8a"></div>
<div class="abs" style="left:14.800000000000011px;top:398.59000000000003px;width:154.5px;height:20.91px;background:#e6e6e6;border-right:1.2px solid #8a8a8a;border-bottom:1.3px solid #8a8a8a"></div>
<div class="t" id="t108" style="left:27.50px;top:403.79px;font-size:11.5px;color:#111;transform:scaleX(0.7701);transform-origin:0 0;">标准数字IO输出</div>
<div class="abs" style="left:169.3px;top:398.59000000000003px;width:117.80000000000001px;height:20.91px;background:#e6e6e6;border-right:1.2px solid #8a8a8a;border-bottom:1.3px solid #8a8a8a"></div>
<div class="t" id="t109" style="left:173.20px;top:400.84px;font-size:13px;color:#111;-webkit-text-stroke:0;transform:scaleX(0.6717);transform-origin:0 0;">ARRAY[0..15] OF bool</div>
<div class="abs" style="left:287.1px;top:398.59000000000003px;width:115.29999999999995px;height:20.91px;background:#e6e6e6;border-right:1.2px solid #8a8a8a;border-bottom:1.3px solid #8a8a8a"></div>
<div class="abs" style="left:288.1px;top:399.59000000000003px;width:112.29999999999995px;height:17.41px;background:#a8a8a8;border:1px solid #b0b0b0"></div>
<div class="abs" style="left:402.4px;top:398.59000000000003px;width:115.70000000000005px;height:20.91px;background:#e6e6e6;border-right:1.2px solid #8a8a8a;border-bottom:1.3px solid #8a8a8a"></div>
<div class="t" id="t110" style="left:407.40px;top:400.84px;font-size:13px;color:#111;-webkit-text-stroke:0;transform:scaleX(0.7200);transform-origin:0 0;">26</div>
<div class="abs" style="left:518.1px;top:398.59000000000003px;width:115.5px;height:20.91px;background:#e6e6e6;border-right:1.2px solid #8a8a8a;border-bottom:1.3px solid #8a8a8a"></div>
<div class="t" id="t111" style="left:522.90px;top:400.84px;font-size:13px;color:#111;-webkit-text-stroke:0;transform:scaleX(0.7200);transform-origin:0 0;">0</div>
<div class="abs" style="left:633.6px;top:398.59000000000003px;width:43.39999999999998px;height:20.91px;background:#e6e6e6;border-right:0;border-bottom:1.3px solid #8a8a8a"></div>
</div>
<div class="abs" style="left:272px;top:564px;width:677px;height:16px;background:#2e2e2e"></div>
<div class="abs" style="left:285px;top:568.7px;width:664px;height:8.3px;background:#6a6a6a"></div>
<svg class="abs" style="left:276px;top:566px" width="6" height="12"><path d="M5 1L1.5 6L5 11" stroke="#777" stroke-width="1" fill="none"/></svg>
<div class="abs" style="left:271px;top:579.5px;width:678px;height:1.5px;background:#9a9a9a"></div>
<div class="abs" style="left:284px;top:172px;width:99.5px;height:275px;background:#6c6c71;border-radius:4px;box-shadow:1px 1px 0 #151515"></div>
<div class="t" id="t112" style="left:297.90px;top:179.15px;font-size:11.5px;color:#f2f2f2;transform:scaleX(0.7821);transform-origin:0 0;">新建数据类型(N)</div>
<div class="t" id="t113" style="left:297.90px;top:200.50px;font-size:11.5px;color:#f2f2f2;transform:scaleX(0.7847);transform-origin:0 0;">新建成员(M)</div>
<div class="abs" style="left:307px;top:216px;width:75px;height:2px;background:#a9a9ad"></div>
<div class="t" id="t114" style="left:297.90px;top:227.00px;font-size:11.5px;color:#f2f2f2;transform:scaleX(0.7754);transform-origin:0 0;">剪切(T)</div>
<div class="t" id="t115" style="left:297.90px;top:247.60px;font-size:11.5px;color:#f2f2f2;transform:scaleX(0.7656);transform-origin:0 0;">复制(C)</div>
<div class="t" id="t116" style="left:297.90px;top:268.30px;font-size:11.5px;color:#8e8e92;transform:scaleX(0.7574);transform-origin:0 0;">粘贴(P)</div>
<div class="t" id="t117" style="left:297.90px;top:290.30px;font-size:11.5px;color:#f2f2f2;transform:scaleX(0.7856);transform-origin:0 0;">删除(D)</div>
<div class="abs" style="left:307px;top:306px;width:75px;height:2px;background:#a9a9ad"></div>
<div class="t" id="t118" style="left:297.90px;top:316.20px;font-size:11.5px;color:#8e8e92;transform:scaleX(0.7856);transform-origin:0 0;">撤销(U)</div>
<div class="t" id="t119" style="left:297.90px;top:337.40px;font-size:11.5px;color:#f2f2f2;transform:scaleX(0.7631);transform-origin:0 0;">重做(R)</div>
<div class="abs" style="left:307px;top:353.6px;width:75px;height:2px;background:#a9a9ad"></div>
<div class="t" id="t120" style="left:297.90px;top:362.60px;font-size:11.5px;color:#f2f2f2;transform:scaleX(0.7708);transform-origin:0 0;">更新偏移</div>
<div class="abs" style="left:307px;top:379.3px;width:75px;height:2px;background:#a9a9ad"></div>
<div class="t" id="t121" style="left:297.90px;top:389.40px;font-size:11.5px;color:#f2f2f2;transform:scaleX(0.7879);transform-origin:0 0;">全选(A)</div>
<div class="t" id="t122" style="left:297.90px;top:411.20px;font-size:11.5px;color:#f2f2f2;transform:scaleX(0.7739);transform-origin:0 0;">折叠全部(O)</div>
<div class="t" id="t123" style="left:297.90px;top:432.10px;font-size:11.5px;color:#f2f2f2;transform:scaleX(0.7530);transform-origin:0 0;">展开全部(E)</div>
<svg class="abs" style="left:0;top:0" width="949" height="784"><path d="M357.14 152.27 L328.38 233.51 L331.22 234.49 L358.46 152.73 Z" fill="#ff1a1a"/><path d="M325.7 243.3 L324.5 230.2 L334.2 235.8 Z" fill="#ff1a1a"/></svg>
<div class="abs" style="left:222px;top:592.5px;width:727px;height:177px;background:#4a494e"></div>
<div class="abs" style="left:222px;top:592.5px;width:727px;height:20.5px;background:linear-gradient(#5c5c5c 0%,#505051 45%,#2a2c2e 52%,#303234 92%,#1e1e1e 100%)"></div>
<div class="t" id="t124" style="left:225.90px;top:598.90px;font-size:11.5px;color:#f2f2f2;transform:scaleX(0.7917);transform-origin:0 0;">编译</div>
<div class="abs" style="left:250px;top:600.8px;width:699px;height:6px;background-color:#343436;background-image:radial-gradient(circle at 1px 1px,#626262 0.6px,transparent 1px),radial-gradient(circle at 2.5px 3px,#1c1c1c 0.75px,transparent 1px),radial-gradient(circle at 1px 5px,#626262 0.6px,transparent 1px);background-size:3px 6px"></div>
<div class="abs" style="left:225px;top:617px;width:49px;height:16px;background:linear-gradient(#8cc4f2,#6aaae6 50%,#5898d8);border:1px solid #1a1a1a"></div>
<div class="abs" style="left:279px;top:617px;width:49px;height:16px;background:linear-gradient(#8cc4f2,#6aaae6 50%,#5898d8);border:1px solid #1a1a1a"></div>
<svg class="abs" style="left:224.5px;top:617px" width="14" height="15"><circle cx="7" cy="7.5" r="6.3" fill="#c81414" stroke="#7a0000" stroke-width=".6"/><path d="M4.3 4.8L9.7 10.2M9.7 4.8L4.3 10.2" stroke="#fff" stroke-width="2"/></svg>
<svg class="abs" style="left:279px;top:617px" width="12" height="15"><path d="M6 0.5L11.8 13.5H0.2Z" fill="#f8dc00" stroke="#8a6a00" stroke-width=".6"/><path d="M6 4.5V9.5M6 10.8V12.5" stroke="#111" stroke-width="1.7"/></svg>
<div class="t" id="t125" style="left:241.60px;top:619.80px;font-size:10.5px;color:#2848a0;-webkit-text-stroke:0;transform:scaleX(0.8000);transform-origin:0 0;">0</div>
<div class="t" id="t126" style="left:252.60px;top:619.80px;font-size:10.5px;color:#2848a0;transform:scaleX(0.8409);transform-origin:0 0;">错误</div>
<div class="t" id="t127" style="left:295.00px;top:619.80px;font-size:10.5px;color:#2848a0;-webkit-text-stroke:0;transform:scaleX(0.8000);transform-origin:0 0;">0</div>
<div class="t" id="t128" style="left:305.30px;top:619.80px;font-size:10.5px;color:#2848a0;transform:scaleX(0.8727);transform-origin:0 0;">警告</div>
<div class="abs" style="left:225px;top:635px;width:724px;height:16px;background:#3c3c40"></div>
<div class="abs" style="left:242.85px;top:638.5px;width:1.6px;height:9px;background:#eee"></div>
<div class="abs" style="left:266.25px;top:638.5px;width:1.6px;height:9px;background:#eee"></div>
<div class="abs" style="left:420.0px;top:639px;width:1.1px;height:8px;background:#ddd"></div>
<div class="abs" style="left:497.2px;top:639px;width:1.1px;height:8px;background:#ddd"></div>
<div class="abs" style="left:612.8px;top:639px;width:1.1px;height:8px;background:#ddd"></div>
<div class="t" id="t129" style="left:333.90px;top:639.10px;font-size:11px;color:#f0f0f0;transform:scaleX(0.8955);transform-origin:0 0;">说明</div>
<div class="t" id="t130" style="left:449.70px;top:639.10px;font-size:11px;color:#f0f0f0;transform:scaleX(0.8909);transform-origin:0 0;">程序</div>
<div class="t" id="t131" style="left:545.80px;top:639.10px;font-size:11px;color:#f0f0f0;transform:scaleX(0.8682);transform-origin:0 0;">位置</div>
<div class="abs" style="left:223px;top:770px;width:22px;height:14px;background:#555558"></div>
<div class="t" id="t132" style="left:225.90px;top:774.90px;font-size:11.5px;color:#a8a8a8;transform:scaleX(0.7083);transform-origin:0 0;">输出</div>
<div class="abs" style="left:249.5px;top:770px;width:24.5px;height:14px;background:#6cb4ee"></div>
<div class="t" id="t133" style="left:251.90px;top:774.90px;font-size:11.5px;color:#111;transform:scaleX(0.8125);transform-origin:0 0;">编译</div>
<div class="abs" style="left:275.6px;top:770px;width:55.39999999999998px;height:14px;background:#555558"></div>
<div class="t" id="t134" style="left:277.90px;top:774.90px;font-size:11.5px;color:#a8a8a8;transform:scaleX(0.8379);transform-origin:0 0;">监视(工程)1</div>
</div></body></html>
